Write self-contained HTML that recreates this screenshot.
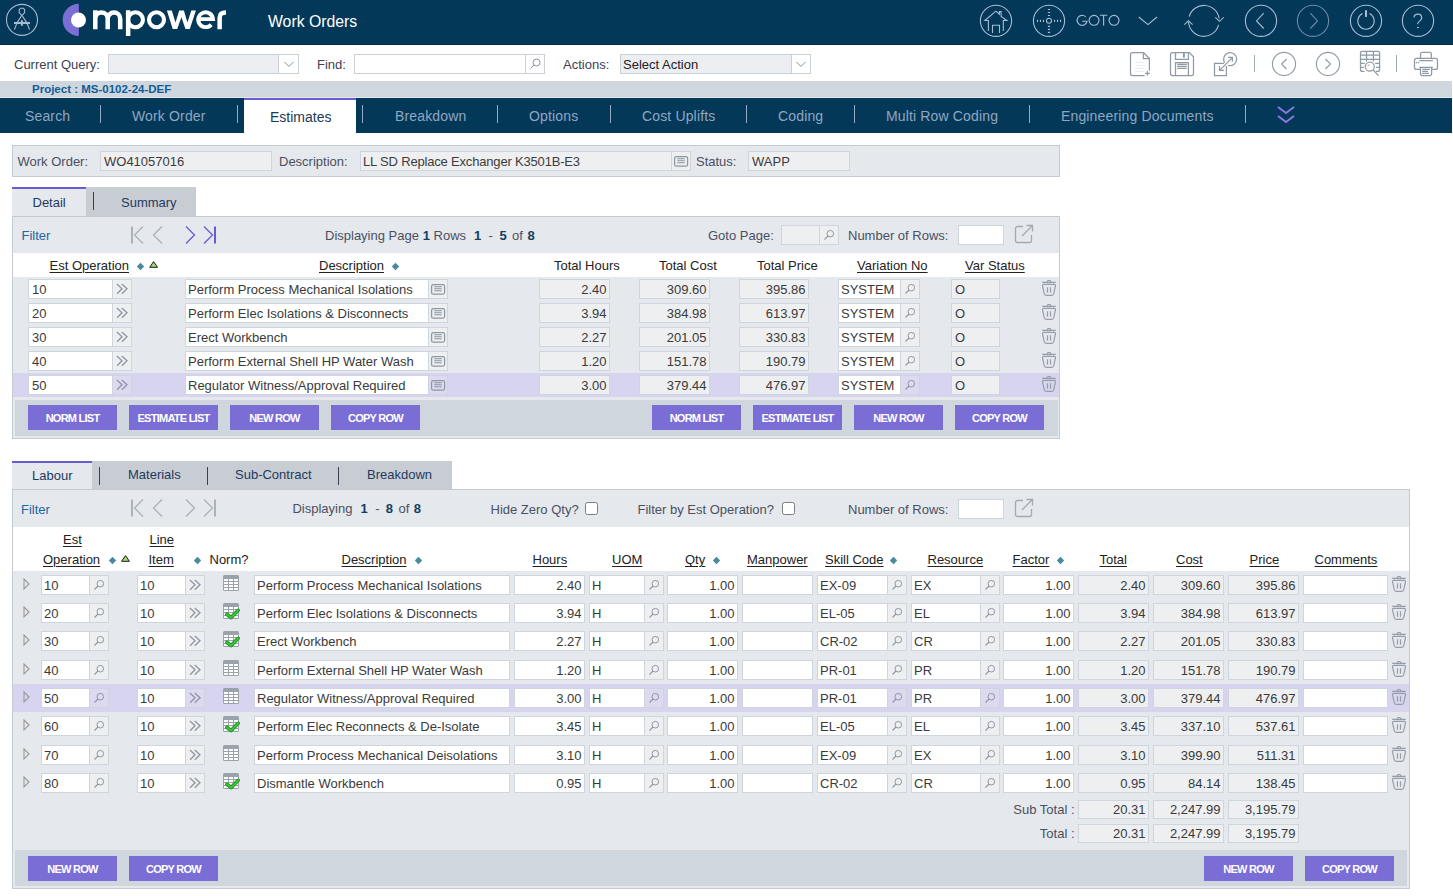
<!DOCTYPE html>
<html><head><meta charset="utf-8"><title>Work Orders</title>
<style>
html,body{margin:0;padding:0;}
body{width:1453px;height:896px;overflow:hidden;position:relative;background:#fff;font-family:"Liberation Sans",sans-serif;}
body div{position:absolute;box-sizing:border-box;}
.t{white-space:pre;line-height:1;}
</style></head><body>
<div style="left:0px;top:0px;width:1453px;height:45px;background:#043858"></div>
<div style="left:0px;top:44px;width:1453px;height:1px;background:#022b47"></div>
<svg style="position:absolute;left:4px;top:3px;" width="36" height="36" viewBox="0 0 36 36"><circle cx="18" cy="16.85" r="15.5" fill="none" stroke="#a6bcd4" stroke-width="1.1"/><path d="M15.2 6.6 L16.6 5.2 H19.2 L20.6 6.6 V9.6 L17.9 12.6 L15.2 9.6 Z" fill="none" stroke="#a6bcd4" stroke-width="1.1"/><path d="M17.4 13.2 Q12.6 19 10.4 26.6 M18.4 13.2 Q23.2 19 25.6 26.6" fill="none" stroke="#a6bcd4" stroke-width="1.1"/><path d="M10 20 H25.9" stroke="#a6bcd4" stroke-width="2.1"/><path d="M17.9 17.2 V22.8" stroke="#a6bcd4" stroke-width="2"/></svg>
<svg style="position:absolute;left:60px;top:2px;" width="34" height="36" viewBox="0 0 34 36"><path d="M18.8 1.8 A16.1 16.1 0 0 0 18.8 34 Z" fill="#7b6fd6"/><circle cx="18.5" cy="18" r="7.5" fill="#fff"/></svg>
<svg style="position:absolute;left:88px;top:5px" width="145" height="34" viewBox="0 0 145 34"><g fill="none" stroke="#fff" stroke-width="4.5" stroke-linecap="butt" stroke-linejoin="miter"><path d="M7.3 24.3 V5.2 M7.3 13.8 A6.2 6.2 0 0 1 19.7 13.8 V24.3 M19.7 13.8 A6.25 6.25 0 0 1 32.2 13.8 V24.3"/><path d="M40.15 5.2 V31"/><circle cx="47.45" cy="14.75" r="7.5" stroke-width="4.1"/><circle cx="68.5" cy="14.75" r="7.5" stroke-width="4.1"/><path d="M78.9 5.6 L83.8 5.6 L87.5 17.5 L91.2 5.6 L95.9 5.6 L99.4 17.5 L103.3 5.6 L107.9 5.6 L101.8 24.1 L97.5 24.1 L93.4 12.3 L89.2 24.1 L84.7 24.1 Z" fill="#fff" stroke="none"/><path d="M110.2 14.1 H125 A7.4 7.4 0 1 0 123.2 19.6" stroke-width="3.9"/><path d="M131.65 24.3 V13 C131.65 9 133.5 7.6 138 7.6"/></g></svg>
<div class="t" style="left:268px;top:13.63px;font-size:15.8px;color:#ffffff;">Work Orders</div>
<svg style="position:absolute;left:978px;top:3px;" width="36" height="36" viewBox="0 0 36 36"><circle cx="18" cy="17.8" r="15.6" fill="none" stroke="#a6bcd4" stroke-width="1.1"/><path d="M10.4 28.1 V17.5 H6.8 L17.9 8.2 L21.4 11.2 V8.6 H23.1 V13.5 L28.9 17.5 H25.3 V28.1 M14.5 29.9 V22.3 H21.5 V29.9" fill="none" stroke="#a6bcd4" stroke-width="1.1"/></svg>
<svg style="position:absolute;left:1031px;top:3px;" width="36" height="36" viewBox="0 0 36 36"><circle cx="18" cy="17.8" r="15.6" fill="none" stroke="#a6bcd4" stroke-width="1.1"/><circle cx="18" cy="17.8" r="2.5" fill="none" stroke="#a6bcd4" stroke-width="1.1"/><path d="M18 5.9 V7 M18 8.9 V10 M18 11.9 V13 M18 22.8 V23.9 M18 25.8 V26.9 M18 28.8 V29.9" stroke="#a6bcd4" stroke-width="2.2"/><path d="M5.9 17.8 H7 M8.9 17.8 H10 M11.9 17.8 H13 M23 17.8 H24.1 M26 17.8 H27.1 M29 17.8 H30.1" stroke="#a6bcd4" stroke-width="2.2"/></svg>
<svg style="position:absolute;left:1070px;top:5px;" width="92" height="30" viewBox="0 0 92 30"><g fill="none" stroke="#a6bcd4" stroke-width="1.15"><path d="M15.7 11.8 A5 5 0 1 0 17.05 16.2 H12.2"/><circle cx="24.05" cy="15.3" r="4.95"/><path d="M29.9 10.25 H37.2 M33.6 10.25 V20.6"/><circle cx="44.05" cy="15.3" r="4.95"/><path d="M68.8 12 L78 19.6 L87 12"/></g></svg>
<svg style="position:absolute;left:1184px;top:3px;" width="40" height="36" viewBox="0 0 40 36"><path d="M5.2 13.7 A15.3 15.3 0 0 1 35.1 15.5" fill="none" stroke="#a6bcd4" stroke-width="1.1"/><path d="M34.6 21.9 A15.3 15.3 0 0 1 4.5 18.5" fill="none" stroke="#a6bcd4" stroke-width="1.1"/><path d="M31.3 14.3 L35.5 18.3 L39.8 14.3 M0.4 21.7 L4.4 17.7 L8.6 21.7" fill="none" stroke="#a6bcd4" stroke-width="1.1"/></svg>
<svg style="position:absolute;left:1243px;top:3px;" width="36" height="36" viewBox="0 0 36 36"><circle cx="18" cy="17.8" r="15.6" fill="none" stroke="#a6bcd4" stroke-width="1.1"/><path d="M20.7 10.2 L13.5 17.9 L20.7 25.5" fill="none" stroke="#a6bcd4" stroke-width="1.1"/></svg>
<svg style="position:absolute;left:1295px;top:3px;" width="36" height="36" viewBox="0 0 36 36"><circle cx="18" cy="17.8" r="15.6" fill="none" stroke="#6d89a6" stroke-width="1.1"/><path d="M15.3 10.2 L22.5 17.9 L15.3 25.5" fill="none" stroke="#6d89a6" stroke-width="1.1"/></svg>
<svg style="position:absolute;left:1348px;top:3px;" width="36" height="36" viewBox="0 0 36 36"><circle cx="18" cy="17.8" r="15.6" fill="none" stroke="#a6bcd4" stroke-width="1.1"/><path d="M14.5 10.6 A8.2 8.2 0 1 0 21.5 10.6" fill="none" stroke="#a6bcd4" stroke-width="1.1"/><path d="M18 7.2 V13.9" fill="none" stroke="#a6bcd4" stroke-width="2.1"/></svg>
<svg style="position:absolute;left:1400px;top:3px;" width="36" height="36" viewBox="0 0 36 36"><circle cx="18" cy="17.8" r="15.6" fill="none" stroke="#a6bcd4" stroke-width="1.1"/><path d="M14 14.3 C14.3 12 16 11.2 17.9 11.2 C20.3 11.2 21.7 12.8 21.7 15 C21.7 17.5 17.5 18.8 17.5 21.3" fill="none" stroke="#a6bcd4" stroke-width="1.2"/><path d="M16.9 24.5 H18.9" stroke="#a6bcd4" stroke-width="1.1"/></svg>
<div class="t" style="left:14px;top:58.00px;font-size:13px;color:#3c4257;">Current Query:</div>
<div style="left:108px;top:54px;width:171px;height:20px;background:#eceef1;border:1px solid #c9d0d8"></div>
<div style="left:278px;top:54px;width:21px;height:20px;background:#fff;border:1px solid #c9d0d8"></div>
<svg style="position:absolute;left:282px;top:58px;" width="14" height="12" viewBox="0 0 14 12"><path d="M2.5 4 L7 8.5 L11.5 4" fill="none" stroke="#8a94a0" stroke-width="1"/></svg>
<div class="t" style="left:317px;top:58.00px;font-size:13px;color:#3c4257;">Find:</div>
<div style="left:354px;top:54px;width:172px;height:20px;background:#fff;border:1px solid #c9d0d8"></div>
<div style="left:525px;top:54px;width:20px;height:20px;background:#fff;border:1px solid #c9d0d8"></div>
<svg style="position:absolute;left:527px;top:56px;" width="16" height="16" viewBox="0 0 16 16"><circle cx="9.5" cy="6.5" r="3.5" fill="none" stroke="#8a94a0" stroke-width="1"/><path d="M7 9 L3.5 12.5" stroke="#8a94a0" stroke-width="1"/></svg>
<div class="t" style="left:563px;top:57.70px;font-size:13px;color:#3c4257;">Actions:</div>
<div style="left:620px;top:54px;width:172px;height:20px;background:#eceef1;border:1px solid #c9d0d8"></div>
<div class="t" style="left:623px;top:57.70px;font-size:13px;color:#222;">Select Action</div>
<div style="left:791px;top:54px;width:20px;height:20px;background:#fff;border:1px solid #c9d0d8"></div>
<svg style="position:absolute;left:794px;top:58px;" width="14" height="12" viewBox="0 0 14 12"><path d="M2.5 4 L7 8.5 L11.5 4" fill="none" stroke="#8a94a0" stroke-width="1"/></svg>
<svg style="position:absolute;left:1126px;top:48px;" width="30" height="30" viewBox="0 0 30 30"><path d="M17.4 4.5 H6.5 A2 2 0 0 0 4.5 6.5 V25.5 A2 2 0 0 0 6.5 27.5 H18.6 M17.4 4.5 L23.4 10.5 V22.8 M17.4 4.5 V10.5 H23.4" fill="none" stroke="#8f9aa5" stroke-width="1.25"/><path d="M9 14.4 H18 M10 17.4 H18.6 M9 20.4 H18 M9 23.4 H18.6" stroke="#e9ecef" stroke-width="1"/><path d="M21.4 23.1 V27.8 M19.1 25.4 H23.9" stroke="#8f9aa5" stroke-width="1.25"/></svg>
<svg style="position:absolute;left:1166px;top:48px;" width="30" height="30" viewBox="0 0 30 30"><path d="M6.5 4.5 H23.4 L27.5 8.8 V25.5 A2 2 0 0 1 25.5 27.5 H6.5 A2 2 0 0 1 4.5 25.5 V6.5 A2 2 0 0 1 6.5 4.5 Z" fill="none" stroke="#8f9aa5" stroke-width="1.25"/><path d="M9.5 4.5 V11.4 H22.4 V4.5 M9.5 27.5 V14.6 H22.4 V27.5 M11.2 16.4 H20.8 M11.2 18.4 H20.8 M11.2 20.4 H20.8" fill="none" stroke="#8f9aa5" stroke-width="1.25"/><path d="M17.9 4.7 V9.7" stroke="#8f9aa5" stroke-width="1.9"/></svg>
<svg style="position:absolute;left:1210px;top:48px;" width="30" height="30" viewBox="0 0 30 30"><path d="M14 15.4 H4.5 V27.5 H16.4 V18.1" fill="none" stroke="#8f9aa5" stroke-width="1.25"/><path d="M14.6 14.6 A6.5 6.5 0 1 1 18.2 17.4" fill="none" stroke="#8f9aa5" stroke-width="1.25"/><path d="M9.9 22.1 L22.1 9.9 M18.1 9.4 H22.4 V13.7 M9.5 18.1 V22.4 H13.9" fill="none" stroke="#8f9aa5" stroke-width="1.25"/></svg>
<div style="left:1254px;top:55px;width:1px;height:17px;background:#a3acb6"></div>
<svg style="position:absolute;left:1270px;top:50px;" width="28" height="28" viewBox="0 0 28 28"><circle cx="14" cy="14" r="11.6" fill="none" stroke="#8f9aa5" stroke-width="1.1"/><path d="M16.5 9 L11.5 14 L16.5 19" fill="none" stroke="#8f9aa5" stroke-width="1.1"/></svg>
<svg style="position:absolute;left:1314px;top:50px;" width="28" height="28" viewBox="0 0 28 28"><circle cx="14" cy="14" r="11.6" fill="none" stroke="#8f9aa5" stroke-width="1.1"/><path d="M11.5 9 L16.5 14 L11.5 19" fill="none" stroke="#8f9aa5" stroke-width="1.1"/></svg>
<svg style="position:absolute;left:1356px;top:48px;" width="30" height="30" viewBox="0 0 30 30"><path d="M8.5 23.4 H6.5 A2 2 0 0 1 4.5 21.4 V5.3 A2 2 0 0 1 6.5 3.3 H21.6 A2 2 0 0 1 23.6 5.3 V21.4 A2 2 0 0 1 21.6 23.4 H20" fill="none" stroke="#8f9aa5" stroke-width="1.25"/><path d="M4.5 7.2 H23.6 M4.5 11.4 H23.6 M4.5 15.4 H8.8 M19 15.4 H23.6 M4.5 19.4 H7.8 M20 19.4 H23.6 M10.5 3.3 V13.4 M17.4 3.3 V13.4" fill="none" stroke="#8f9aa5" stroke-width="1.25"/><circle cx="13.8" cy="18.6" r="4.5" fill="none" stroke="#8f9aa5" stroke-width="1.25"/><path d="M17.2 22 L22.6 27.6" stroke="#8f9aa5" stroke-width="1.25"/><path d="M11.5 18.2 L13.3 16.3" stroke="#8f9aa5" stroke-width="1"/></svg>
<div style="left:1396px;top:55px;width:1px;height:17px;background:#a3acb6"></div>
<svg style="position:absolute;left:1410px;top:48px;" width="30" height="30" viewBox="0 0 30 30"><path d="M10.5 10.4 V6.4 A2 2 0 0 1 12.5 4.4 H19.4 A2 2 0 0 1 21.4 6.4 V10.4" fill="none" stroke="#8f9aa5" stroke-width="1.25"/><path d="M10.5 21.4 H6.5 A2 2 0 0 1 4.5 19.4 V12.4 A2 2 0 0 1 6.5 10.4 H25.5 A2 2 0 0 1 27.5 12.4 V19.4 A2 2 0 0 1 25.5 21.4 H21.6" fill="none" stroke="#8f9aa5" stroke-width="1.25"/><path d="M9.4 12.6 H22.8 M9.4 19.4 H22.8 M10.5 19.4 V25.5 A2 2 0 0 0 12.5 27.5 H19.6 A2 2 0 0 0 21.6 25.5 V19.4 M12.2 21.4 H19.8 M12.2 23.4 H17.9 M12.2 25.4 H18.9" fill="none" stroke="#8f9aa5" stroke-width="1.25"/><circle cx="6.4" cy="14.6" r="0.8" fill="#8f9aa5"/><circle cx="8.5" cy="14.6" r="0.8" fill="#8f9aa5"/></svg>
<div style="left:0px;top:81px;width:1452px;height:16px;background:#d0d6de"></div>
<div style="left:0px;top:97px;width:1452px;height:1px;background:#e6e9ec"></div>
<div class="t" style="left:32px;top:84.27px;font-size:11.5px;color:#0f5c98;font-weight:bold">Project : MS-0102-24-DEF</div>
<div style="left:0px;top:98px;width:1452px;height:35px;background:#043858"></div>
<div style="left:244px;top:98px;width:112px;height:35px;background:#fff"></div>
<div style="left:244px;top:98px;width:112px;height:2px;background:#6b5bd2"></div>
<div class="t" style="left:25px;top:109.15px;font-size:14px;color:#8fa7c3;letter-spacing:0.15px">Search</div>
<div class="t" style="left:132px;top:109.15px;font-size:14px;color:#8fa7c3;letter-spacing:0.15px">Work Order</div>
<div class="t" style="left:395px;top:109.15px;font-size:14px;color:#8fa7c3;letter-spacing:0.15px">Breakdown</div>
<div class="t" style="left:529px;top:109.15px;font-size:14px;color:#8fa7c3;letter-spacing:0.15px">Options</div>
<div class="t" style="left:642px;top:109.15px;font-size:14px;color:#8fa7c3;letter-spacing:0.15px">Cost Uplifts</div>
<div class="t" style="left:778px;top:109.15px;font-size:14px;color:#8fa7c3;letter-spacing:0.15px">Coding</div>
<div class="t" style="left:886px;top:109.15px;font-size:14px;color:#8fa7c3;letter-spacing:0.15px">Multi Row Coding</div>
<div class="t" style="left:1061px;top:109.15px;font-size:14px;color:#8fa7c3;letter-spacing:0.15px">Engineering Documents</div>
<div class="t" style="left:270px;top:109.65px;font-size:14px;color:#1b3a5a;">Estimates</div>
<div style="left:100px;top:105px;width:1px;height:18px;background:#93abc6"></div>
<div style="left:237px;top:105px;width:1px;height:18px;background:#93abc6"></div>
<div style="left:362px;top:105px;width:1px;height:18px;background:#93abc6"></div>
<div style="left:497px;top:105px;width:1px;height:18px;background:#93abc6"></div>
<div style="left:610px;top:105px;width:1px;height:18px;background:#93abc6"></div>
<div style="left:746px;top:105px;width:1px;height:18px;background:#93abc6"></div>
<div style="left:854px;top:105px;width:1px;height:18px;background:#93abc6"></div>
<div style="left:1029px;top:105px;width:1px;height:18px;background:#93abc6"></div>
<div style="left:1245px;top:105px;width:1px;height:18px;background:#93abc6"></div>
<svg style="position:absolute;left:1274px;top:103px;" width="24" height="24" viewBox="0 0 24 24"><path d="M4 4 L12 10 L20 4 M4 13 L12 19 L20 13" fill="none" stroke="#8b78e0" stroke-width="2"/></svg>
<div style="left:12px;top:145px;width:1048px;height:32px;background:#e5e8ec;border:1px solid #c4cacf"></div>
<div class="t" style="left:17.5px;top:155.00px;font-size:13px;color:#4a5063;">Work Order:</div>
<div style="left:100px;top:151px;width:172px;height:20px;background:#eeeff1;border:1px solid #cfd5dc"></div>
<div class="t" style="left:104px;top:155.00px;font-size:13px;color:#3a3a3a;">WO41057016</div>
<div class="t" style="left:279px;top:155.00px;font-size:13px;color:#4a5063;">Description:</div>
<div style="left:360px;top:151px;width:312px;height:20px;background:#eeeff1;border:1px solid #cfd5dc"></div>
<div class="t" style="left:363px;top:155.00px;font-size:13px;color:#3d3d3d;letter-spacing:-0.18px">LL SD Replace Exchanger K3501B-E3</div>
<div style="left:671px;top:151px;width:20px;height:20px;background:#eeeff1;border:1px solid #cfd5dc"></div>
<svg style="position:absolute;left:671px;top:151px;" width="20" height="20" viewBox="0 0 20 20"><rect x="3.6" y="5.6" width="13" height="9.6" rx="1.8" fill="none" stroke="#8f97a3" stroke-width="1.25"/><path d="M6.2 7.7 H13.8 M6.2 9.8 H13.8 M6.2 11.8 H13.8" stroke="#8f97a3" stroke-width="1.05"/></svg>
<div class="t" style="left:696px;top:155.00px;font-size:13px;color:#4a5063;">Status:</div>
<div style="left:748px;top:151px;width:102px;height:20px;background:#eeeff1;border:1px solid #cfd5dc"></div>
<div class="t" style="left:752px;top:155.00px;font-size:13px;color:#3a3a3a;">WAPP</div>
<div style="left:12px;top:187px;width:74px;height:30px;background:#e5e8ec"></div>
<div style="left:12px;top:187px;width:74px;height:2px;background:#6b5bd2"></div>
<div style="left:86px;top:187px;width:110px;height:30px;background:#c8cdd3"></div>
<div style="left:93px;top:192px;width:1px;height:18px;background:#3a3f55"></div>
<div class="t" style="left:32.5px;top:196.00px;font-size:13px;color:#1f3a5f;">Detail</div>
<div class="t" style="left:121px;top:196.00px;font-size:13px;color:#1f3a5f;">Summary</div>
<div style="left:12px;top:216px;width:1048px;height:223px;background:#e5e8ec;border:1px solid #c4cacf"></div>
<div class="t" style="left:21.5px;top:229.00px;font-size:13px;color:#1b67a1;">Filter</div>
<svg style="position:absolute;left:125px;top:220px;" width="100" height="30" viewBox="0 0 100 30"><path d="M7 6.5 V23.5" stroke="#a9b3bb" stroke-width="2"/><path d="M18 6.5 L9.5 15 L18 23.5 M37 6.5 L28.5 15 L37 23.5" fill="none" stroke="#a9b3bb" stroke-width="1.3"/><path d="M61 6.5 L69.5 15 L61 23.5 M79 6.5 L87.5 15 L79 23.5" fill="none" stroke="#6b5bd2" stroke-width="1.3"/><path d="M90 6.5 V23.5" stroke="#6b5bd2" stroke-width="2"/></svg>
<div class="t" style="left:325px;top:229.00px;font-size:13px;color:#4a5063;">Displaying Page</div>
<div class="t" style="left:422.8px;top:229.00px;font-size:13px;color:#123f62;font-weight:bold">1</div>
<div class="t" style="left:433.6px;top:229.00px;font-size:13px;color:#4a5063;">Rows</div>
<div class="t" style="left:473.9px;top:229.00px;font-size:13px;color:#123f62;font-weight:bold">1</div>
<div class="t" style="left:488.4px;top:229.00px;font-size:13px;color:#4a5063;">-</div>
<div class="t" style="left:499.6px;top:229.00px;font-size:13px;color:#123f62;font-weight:bold">5</div>
<div class="t" style="left:512px;top:229.00px;font-size:13px;color:#4a5063;">of</div>
<div class="t" style="left:527.5px;top:229.00px;font-size:13px;color:#123f62;font-weight:bold">8</div>
<div class="t" style="left:708px;top:229.00px;font-size:13px;color:#4a5063;">Goto Page:</div>
<div style="left:781px;top:225px;width:39px;height:20px;background:#eeeff1;border:1px solid #cfd5dc"></div>
<div style="left:819px;top:225px;width:20px;height:20px;background:#eeeff1;border:1px solid #cfd5dc"></div>
<svg style="position:absolute;left:822px;top:228px;" width="14" height="14" viewBox="0 0 14 14"><circle cx="8.3" cy="5.7" r="3.3" fill="none" stroke="#8f97a3" stroke-width="1"/><path d="M6 8 L2.5 11.5" stroke="#8f97a3" stroke-width="1.1"/></svg>
<div class="t" style="left:848px;top:229.00px;font-size:13px;color:#4a5063;">Number of Rows:</div>
<div style="left:958px;top:225px;width:46px;height:20px;background:#fff;border:1px solid #cfd5dc"></div>
<svg style="position:absolute;left:1013px;top:223px;" width="22" height="22" viewBox="0 0 22 22"><path d="M10 3.5 H4.5 A2 2 0 0 0 2.5 5.5 V17.5 A2 2 0 0 0 4.5 19.5 H16.5 A2 2 0 0 0 18.5 17.5 V12" fill="none" stroke="#a2aab4" stroke-width="1.3"/><path d="M9 13 L19.5 2.5 M13.5 2.5 H19.5 V8.5" fill="none" stroke="#a2aab4" stroke-width="1.3"/></svg>
<div style="left:13px;top:253px;width:1046px;height:24px;background:#fff"></div>
<div class="t" style="left:49.5px;top:259.00px;font-size:13px;color:#222;text-decoration:underline;text-underline-offset:2px">Est Operation</div>
<svg style="position:absolute;left:135px;top:261px;" width="10" height="10" viewBox="0 0 10 10"><path d="M5.5 1.7999999999999998 L9.2 5.5 L5.5 9.2 L1.7999999999999998 5.5 Z" fill="#4a8a9e"/></svg>
<svg style="position:absolute;left:148px;top:260px;" width="12" height="10" viewBox="0 0 12 10"><path d="M5.60 1.60 L9.50 7.30 H1.70 Z" fill="#a2da6e" stroke="#1a1a1a" stroke-width="1"/></svg>
<div class="t" style="left:319px;top:259.00px;font-size:13px;color:#222;text-decoration:underline;text-underline-offset:2px">Description</div>
<svg style="position:absolute;left:390px;top:261px;" width="10" height="10" viewBox="0 0 10 10"><path d="M5.5 1.7999999999999998 L9.2 5.5 L5.5 9.2 L1.7999999999999998 5.5 Z" fill="#4a8a9e"/></svg>
<div class="t" style="left:554px;top:259.00px;font-size:13px;color:#222;">Total Hours</div>
<div class="t" style="left:659px;top:259.00px;font-size:13px;color:#222;">Total Cost</div>
<div class="t" style="left:757px;top:259.00px;font-size:13px;color:#222;">Total Price</div>
<div class="t" style="left:857px;top:259.00px;font-size:13px;color:#222;text-decoration:underline;text-underline-offset:2px">Variation No</div>
<div class="t" style="left:965px;top:259.00px;font-size:13px;color:#222;text-decoration:underline;text-underline-offset:2px">Var Status</div>
<div style="left:28px;top:279px;width:85px;height:20px;background:#fff;border:1px solid #cfd5dc"></div>
<div class="t" style="left:32px;top:282.80px;font-size:13px;color:#3a3a3a;">10</div>
<div style="left:112px;top:279px;width:20px;height:20px;background:#eeeff1;border:1px solid #cfd5dc"></div>
<svg style="position:absolute;left:115px;top:282px;" width="14" height="14" viewBox="0 0 14 14"><path d="M1.9 1.9 L7 6.8 L2.1 11.8 M6.8 1.9 L12 6.8 L6.8 11.8" fill="none" stroke="#8f97a3" stroke-width="1.35"/></svg>
<div style="left:185px;top:279px;width:244px;height:20px;background:#fff;border:1px solid #cfd5dc"></div>
<div class="t" style="left:188px;top:282.80px;font-size:13px;color:#3a3a3a;">Perform Process Mechanical Isolations</div>
<div style="left:428px;top:279px;width:20px;height:20px;background:#eeeff1;border:1px solid #cfd5dc"></div>
<svg style="position:absolute;left:428px;top:279px;" width="20" height="20" viewBox="0 0 20 20"><rect x="3.6" y="5.6" width="13" height="9.6" rx="1.8" fill="none" stroke="#8f97a3" stroke-width="1.25"/><path d="M6.2 7.7 H13.8 M6.2 9.8 H13.8 M6.2 11.8 H13.8" stroke="#8f97a3" stroke-width="1.05"/></svg>
<div style="left:539px;top:279px;width:71px;height:20px;background:#eeeff1;border:1px solid #cfd5dc"></div>
<div class="t" style="right:846.5px;top:282.80px;font-size:13px;color:#3a3a3a;text-align:right;">2.40</div>
<div style="left:639px;top:279px;width:71px;height:20px;background:#eeeff1;border:1px solid #cfd5dc"></div>
<div class="t" style="right:746.5px;top:282.80px;font-size:13px;color:#3a3a3a;text-align:right;">309.60</div>
<div style="left:739px;top:279px;width:70px;height:20px;background:#eeeff1;border:1px solid #cfd5dc"></div>
<div class="t" style="right:647.5px;top:282.80px;font-size:13px;color:#3a3a3a;text-align:right;">395.86</div>
<div style="left:838px;top:279px;width:63px;height:20px;background:#fff;border:1px solid #cfd5dc"></div>
<div class="t" style="left:841px;top:282.80px;font-size:13px;color:#3a3a3a;">SYSTEM</div>
<div style="left:900px;top:279px;width:20px;height:20px;background:#eeeff1;border:1px solid #cfd5dc"></div>
<svg style="position:absolute;left:903px;top:282px;" width="14" height="14" viewBox="0 0 14 14"><circle cx="8.3" cy="5.7" r="3.3" fill="none" stroke="#8f97a3" stroke-width="1"/><path d="M6 8 L2.5 11.5" stroke="#8f97a3" stroke-width="1.1"/></svg>
<div style="left:951px;top:279px;width:49px;height:20px;background:#eeeff1;border:1px solid #cfd5dc"></div>
<div class="t" style="left:955px;top:282.80px;font-size:13px;color:#3a3a3a;">O</div>
<svg style="position:absolute;left:1041px;top:280px;" width="16" height="17" viewBox="0 0 16 17"><path d="M1.2 2.4 H14.8 M6.1 2.4 A1.9 1.9 0 0 1 9.9 2.4" fill="none" stroke="#959da8" stroke-width="1.15"/><path d="M2.6 4.4 H13.4 A1.2 1.2 0 0 1 14.5 5.8 L12.6 14.2 A1.5 1.5 0 0 1 11.2 15.3 H4.8 A1.5 1.5 0 0 1 3.4 14.2 L1.5 5.8 A1.2 1.2 0 0 1 2.6 4.4 Z M6.5 7.2 V12.7 M9.5 7.2 V12.7" fill="none" stroke="#959da8" stroke-width="1.15"/></svg>
<div style="left:28px;top:303px;width:85px;height:20px;background:#fff;border:1px solid #cfd5dc"></div>
<div class="t" style="left:32px;top:306.80px;font-size:13px;color:#3a3a3a;">20</div>
<div style="left:112px;top:303px;width:20px;height:20px;background:#eeeff1;border:1px solid #cfd5dc"></div>
<svg style="position:absolute;left:115px;top:306px;" width="14" height="14" viewBox="0 0 14 14"><path d="M1.9 1.9 L7 6.8 L2.1 11.8 M6.8 1.9 L12 6.8 L6.8 11.8" fill="none" stroke="#8f97a3" stroke-width="1.35"/></svg>
<div style="left:185px;top:303px;width:244px;height:20px;background:#fff;border:1px solid #cfd5dc"></div>
<div class="t" style="left:188px;top:306.80px;font-size:13px;color:#3a3a3a;">Perform Elec Isolations &amp; Disconnects</div>
<div style="left:428px;top:303px;width:20px;height:20px;background:#eeeff1;border:1px solid #cfd5dc"></div>
<svg style="position:absolute;left:428px;top:303px;" width="20" height="20" viewBox="0 0 20 20"><rect x="3.6" y="5.6" width="13" height="9.6" rx="1.8" fill="none" stroke="#8f97a3" stroke-width="1.25"/><path d="M6.2 7.7 H13.8 M6.2 9.8 H13.8 M6.2 11.8 H13.8" stroke="#8f97a3" stroke-width="1.05"/></svg>
<div style="left:539px;top:303px;width:71px;height:20px;background:#eeeff1;border:1px solid #cfd5dc"></div>
<div class="t" style="right:846.5px;top:306.80px;font-size:13px;color:#3a3a3a;text-align:right;">3.94</div>
<div style="left:639px;top:303px;width:71px;height:20px;background:#eeeff1;border:1px solid #cfd5dc"></div>
<div class="t" style="right:746.5px;top:306.80px;font-size:13px;color:#3a3a3a;text-align:right;">384.98</div>
<div style="left:739px;top:303px;width:70px;height:20px;background:#eeeff1;border:1px solid #cfd5dc"></div>
<div class="t" style="right:647.5px;top:306.80px;font-size:13px;color:#3a3a3a;text-align:right;">613.97</div>
<div style="left:838px;top:303px;width:63px;height:20px;background:#fff;border:1px solid #cfd5dc"></div>
<div class="t" style="left:841px;top:306.80px;font-size:13px;color:#3a3a3a;">SYSTEM</div>
<div style="left:900px;top:303px;width:20px;height:20px;background:#eeeff1;border:1px solid #cfd5dc"></div>
<svg style="position:absolute;left:903px;top:306px;" width="14" height="14" viewBox="0 0 14 14"><circle cx="8.3" cy="5.7" r="3.3" fill="none" stroke="#8f97a3" stroke-width="1"/><path d="M6 8 L2.5 11.5" stroke="#8f97a3" stroke-width="1.1"/></svg>
<div style="left:951px;top:303px;width:49px;height:20px;background:#eeeff1;border:1px solid #cfd5dc"></div>
<div class="t" style="left:955px;top:306.80px;font-size:13px;color:#3a3a3a;">O</div>
<svg style="position:absolute;left:1041px;top:304px;" width="16" height="17" viewBox="0 0 16 17"><path d="M1.2 2.4 H14.8 M6.1 2.4 A1.9 1.9 0 0 1 9.9 2.4" fill="none" stroke="#959da8" stroke-width="1.15"/><path d="M2.6 4.4 H13.4 A1.2 1.2 0 0 1 14.5 5.8 L12.6 14.2 A1.5 1.5 0 0 1 11.2 15.3 H4.8 A1.5 1.5 0 0 1 3.4 14.2 L1.5 5.8 A1.2 1.2 0 0 1 2.6 4.4 Z M6.5 7.2 V12.7 M9.5 7.2 V12.7" fill="none" stroke="#959da8" stroke-width="1.15"/></svg>
<div style="left:28px;top:327px;width:85px;height:20px;background:#fff;border:1px solid #cfd5dc"></div>
<div class="t" style="left:32px;top:330.80px;font-size:13px;color:#3a3a3a;">30</div>
<div style="left:112px;top:327px;width:20px;height:20px;background:#eeeff1;border:1px solid #cfd5dc"></div>
<svg style="position:absolute;left:115px;top:330px;" width="14" height="14" viewBox="0 0 14 14"><path d="M1.9 1.9 L7 6.8 L2.1 11.8 M6.8 1.9 L12 6.8 L6.8 11.8" fill="none" stroke="#8f97a3" stroke-width="1.35"/></svg>
<div style="left:185px;top:327px;width:244px;height:20px;background:#fff;border:1px solid #cfd5dc"></div>
<div class="t" style="left:188px;top:330.80px;font-size:13px;color:#3a3a3a;">Erect Workbench</div>
<div style="left:428px;top:327px;width:20px;height:20px;background:#eeeff1;border:1px solid #cfd5dc"></div>
<svg style="position:absolute;left:428px;top:327px;" width="20" height="20" viewBox="0 0 20 20"><rect x="3.6" y="5.6" width="13" height="9.6" rx="1.8" fill="none" stroke="#8f97a3" stroke-width="1.25"/><path d="M6.2 7.7 H13.8 M6.2 9.8 H13.8 M6.2 11.8 H13.8" stroke="#8f97a3" stroke-width="1.05"/></svg>
<div style="left:539px;top:327px;width:71px;height:20px;background:#eeeff1;border:1px solid #cfd5dc"></div>
<div class="t" style="right:846.5px;top:330.80px;font-size:13px;color:#3a3a3a;text-align:right;">2.27</div>
<div style="left:639px;top:327px;width:71px;height:20px;background:#eeeff1;border:1px solid #cfd5dc"></div>
<div class="t" style="right:746.5px;top:330.80px;font-size:13px;color:#3a3a3a;text-align:right;">201.05</div>
<div style="left:739px;top:327px;width:70px;height:20px;background:#eeeff1;border:1px solid #cfd5dc"></div>
<div class="t" style="right:647.5px;top:330.80px;font-size:13px;color:#3a3a3a;text-align:right;">330.83</div>
<div style="left:838px;top:327px;width:63px;height:20px;background:#fff;border:1px solid #cfd5dc"></div>
<div class="t" style="left:841px;top:330.80px;font-size:13px;color:#3a3a3a;">SYSTEM</div>
<div style="left:900px;top:327px;width:20px;height:20px;background:#eeeff1;border:1px solid #cfd5dc"></div>
<svg style="position:absolute;left:903px;top:330px;" width="14" height="14" viewBox="0 0 14 14"><circle cx="8.3" cy="5.7" r="3.3" fill="none" stroke="#8f97a3" stroke-width="1"/><path d="M6 8 L2.5 11.5" stroke="#8f97a3" stroke-width="1.1"/></svg>
<div style="left:951px;top:327px;width:49px;height:20px;background:#eeeff1;border:1px solid #cfd5dc"></div>
<div class="t" style="left:955px;top:330.80px;font-size:13px;color:#3a3a3a;">O</div>
<svg style="position:absolute;left:1041px;top:328px;" width="16" height="17" viewBox="0 0 16 17"><path d="M1.2 2.4 H14.8 M6.1 2.4 A1.9 1.9 0 0 1 9.9 2.4" fill="none" stroke="#959da8" stroke-width="1.15"/><path d="M2.6 4.4 H13.4 A1.2 1.2 0 0 1 14.5 5.8 L12.6 14.2 A1.5 1.5 0 0 1 11.2 15.3 H4.8 A1.5 1.5 0 0 1 3.4 14.2 L1.5 5.8 A1.2 1.2 0 0 1 2.6 4.4 Z M6.5 7.2 V12.7 M9.5 7.2 V12.7" fill="none" stroke="#959da8" stroke-width="1.15"/></svg>
<div style="left:28px;top:351px;width:85px;height:20px;background:#fff;border:1px solid #cfd5dc"></div>
<div class="t" style="left:32px;top:354.80px;font-size:13px;color:#3a3a3a;">40</div>
<div style="left:112px;top:351px;width:20px;height:20px;background:#eeeff1;border:1px solid #cfd5dc"></div>
<svg style="position:absolute;left:115px;top:354px;" width="14" height="14" viewBox="0 0 14 14"><path d="M1.9 1.9 L7 6.8 L2.1 11.8 M6.8 1.9 L12 6.8 L6.8 11.8" fill="none" stroke="#8f97a3" stroke-width="1.35"/></svg>
<div style="left:185px;top:351px;width:244px;height:20px;background:#fff;border:1px solid #cfd5dc"></div>
<div class="t" style="left:188px;top:354.80px;font-size:13px;color:#3a3a3a;">Perform External Shell HP Water Wash</div>
<div style="left:428px;top:351px;width:20px;height:20px;background:#eeeff1;border:1px solid #cfd5dc"></div>
<svg style="position:absolute;left:428px;top:351px;" width="20" height="20" viewBox="0 0 20 20"><rect x="3.6" y="5.6" width="13" height="9.6" rx="1.8" fill="none" stroke="#8f97a3" stroke-width="1.25"/><path d="M6.2 7.7 H13.8 M6.2 9.8 H13.8 M6.2 11.8 H13.8" stroke="#8f97a3" stroke-width="1.05"/></svg>
<div style="left:539px;top:351px;width:71px;height:20px;background:#eeeff1;border:1px solid #cfd5dc"></div>
<div class="t" style="right:846.5px;top:354.80px;font-size:13px;color:#3a3a3a;text-align:right;">1.20</div>
<div style="left:639px;top:351px;width:71px;height:20px;background:#eeeff1;border:1px solid #cfd5dc"></div>
<div class="t" style="right:746.5px;top:354.80px;font-size:13px;color:#3a3a3a;text-align:right;">151.78</div>
<div style="left:739px;top:351px;width:70px;height:20px;background:#eeeff1;border:1px solid #cfd5dc"></div>
<div class="t" style="right:647.5px;top:354.80px;font-size:13px;color:#3a3a3a;text-align:right;">190.79</div>
<div style="left:838px;top:351px;width:63px;height:20px;background:#fff;border:1px solid #cfd5dc"></div>
<div class="t" style="left:841px;top:354.80px;font-size:13px;color:#3a3a3a;">SYSTEM</div>
<div style="left:900px;top:351px;width:20px;height:20px;background:#eeeff1;border:1px solid #cfd5dc"></div>
<svg style="position:absolute;left:903px;top:354px;" width="14" height="14" viewBox="0 0 14 14"><circle cx="8.3" cy="5.7" r="3.3" fill="none" stroke="#8f97a3" stroke-width="1"/><path d="M6 8 L2.5 11.5" stroke="#8f97a3" stroke-width="1.1"/></svg>
<div style="left:951px;top:351px;width:49px;height:20px;background:#eeeff1;border:1px solid #cfd5dc"></div>
<div class="t" style="left:955px;top:354.80px;font-size:13px;color:#3a3a3a;">O</div>
<svg style="position:absolute;left:1041px;top:352px;" width="16" height="17" viewBox="0 0 16 17"><path d="M1.2 2.4 H14.8 M6.1 2.4 A1.9 1.9 0 0 1 9.9 2.4" fill="none" stroke="#959da8" stroke-width="1.15"/><path d="M2.6 4.4 H13.4 A1.2 1.2 0 0 1 14.5 5.8 L12.6 14.2 A1.5 1.5 0 0 1 11.2 15.3 H4.8 A1.5 1.5 0 0 1 3.4 14.2 L1.5 5.8 A1.2 1.2 0 0 1 2.6 4.4 Z M6.5 7.2 V12.7 M9.5 7.2 V12.7" fill="none" stroke="#959da8" stroke-width="1.15"/></svg>
<div style="left:13px;top:373px;width:1046px;height:24px;background:#d7d4ef"></div>
<div style="left:28px;top:375px;width:85px;height:20px;background:#fff;border:1px solid #cfd5dc"></div>
<div class="t" style="left:32px;top:378.80px;font-size:13px;color:#3a3a3a;">50</div>
<div style="left:112px;top:375px;width:20px;height:20px;background:#dcd9f0;border:1px solid #cfd5dc"></div>
<svg style="position:absolute;left:115px;top:378px;" width="14" height="14" viewBox="0 0 14 14"><path d="M1.9 1.9 L7 6.8 L2.1 11.8 M6.8 1.9 L12 6.8 L6.8 11.8" fill="none" stroke="#8f97a3" stroke-width="1.35"/></svg>
<div style="left:185px;top:375px;width:244px;height:20px;background:#fff;border:1px solid #cfd5dc"></div>
<div class="t" style="left:188px;top:378.80px;font-size:13px;color:#3a3a3a;">Regulator Witness/Approval Required</div>
<div style="left:428px;top:375px;width:20px;height:20px;background:#dcd9f0;border:1px solid #cfd5dc"></div>
<svg style="position:absolute;left:428px;top:375px;" width="20" height="20" viewBox="0 0 20 20"><rect x="3.6" y="5.6" width="13" height="9.6" rx="1.8" fill="none" stroke="#8f97a3" stroke-width="1.25"/><path d="M6.2 7.7 H13.8 M6.2 9.8 H13.8 M6.2 11.8 H13.8" stroke="#8f97a3" stroke-width="1.05"/></svg>
<div style="left:539px;top:375px;width:71px;height:20px;background:#eeeff1;border:1px solid #cfd5dc"></div>
<div class="t" style="right:846.5px;top:378.80px;font-size:13px;color:#3a3a3a;text-align:right;">3.00</div>
<div style="left:639px;top:375px;width:71px;height:20px;background:#eeeff1;border:1px solid #cfd5dc"></div>
<div class="t" style="right:746.5px;top:378.80px;font-size:13px;color:#3a3a3a;text-align:right;">379.44</div>
<div style="left:739px;top:375px;width:70px;height:20px;background:#eeeff1;border:1px solid #cfd5dc"></div>
<div class="t" style="right:647.5px;top:378.80px;font-size:13px;color:#3a3a3a;text-align:right;">476.97</div>
<div style="left:838px;top:375px;width:63px;height:20px;background:#fff;border:1px solid #cfd5dc"></div>
<div class="t" style="left:841px;top:378.80px;font-size:13px;color:#3a3a3a;">SYSTEM</div>
<div style="left:900px;top:375px;width:20px;height:20px;background:#dcd9f0;border:1px solid #cfd5dc"></div>
<svg style="position:absolute;left:903px;top:378px;" width="14" height="14" viewBox="0 0 14 14"><circle cx="8.3" cy="5.7" r="3.3" fill="none" stroke="#8f97a3" stroke-width="1"/><path d="M6 8 L2.5 11.5" stroke="#8f97a3" stroke-width="1.1"/></svg>
<div style="left:951px;top:375px;width:49px;height:20px;background:#eeeff1;border:1px solid #cfd5dc"></div>
<div class="t" style="left:955px;top:378.80px;font-size:13px;color:#3a3a3a;">O</div>
<svg style="position:absolute;left:1041px;top:376px;" width="16" height="17" viewBox="0 0 16 17"><path d="M1.2 2.4 H14.8 M6.1 2.4 A1.9 1.9 0 0 1 9.9 2.4" fill="none" stroke="#959da8" stroke-width="1.15"/><path d="M2.6 4.4 H13.4 A1.2 1.2 0 0 1 14.5 5.8 L12.6 14.2 A1.5 1.5 0 0 1 11.2 15.3 H4.8 A1.5 1.5 0 0 1 3.4 14.2 L1.5 5.8 A1.2 1.2 0 0 1 2.6 4.4 Z M6.5 7.2 V12.7 M9.5 7.2 V12.7" fill="none" stroke="#959da8" stroke-width="1.15"/></svg>
<div style="left:15px;top:400px;width:1043px;height:36px;background:#d0d6de"></div>
<div style="left:28px;top:405px;width:89px;height:25px;background:#7a6dd6;color:#fff;font-size:11px;font-weight:bold;letter-spacing:-0.75px;text-align:center;line-height:26px;white-space:pre">NORM LIST</div>
<div style="left:129px;top:405px;width:89px;height:25px;background:#7a6dd6;color:#fff;font-size:11px;font-weight:bold;letter-spacing:-0.75px;text-align:center;line-height:26px;white-space:pre">ESTIMATE LIST</div>
<div style="left:230px;top:405px;width:89px;height:25px;background:#7a6dd6;color:#fff;font-size:11px;font-weight:bold;letter-spacing:-0.75px;text-align:center;line-height:26px;white-space:pre">NEW ROW</div>
<div style="left:331px;top:405px;width:89px;height:25px;background:#7a6dd6;color:#fff;font-size:11px;font-weight:bold;letter-spacing:-0.75px;text-align:center;line-height:26px;white-space:pre">COPY ROW</div>
<div style="left:652px;top:405px;width:89px;height:25px;background:#7a6dd6;color:#fff;font-size:11px;font-weight:bold;letter-spacing:-0.75px;text-align:center;line-height:26px;white-space:pre">NORM LIST</div>
<div style="left:753px;top:405px;width:89px;height:25px;background:#7a6dd6;color:#fff;font-size:11px;font-weight:bold;letter-spacing:-0.75px;text-align:center;line-height:26px;white-space:pre">ESTIMATE LIST</div>
<div style="left:854px;top:405px;width:89px;height:25px;background:#7a6dd6;color:#fff;font-size:11px;font-weight:bold;letter-spacing:-0.75px;text-align:center;line-height:26px;white-space:pre">NEW ROW</div>
<div style="left:955px;top:405px;width:89px;height:25px;background:#7a6dd6;color:#fff;font-size:11px;font-weight:bold;letter-spacing:-0.75px;text-align:center;line-height:26px;white-space:pre">COPY ROW</div>
<div style="left:12px;top:461px;width:80px;height:29px;background:#e5e8ec"></div>
<div style="left:12px;top:461px;width:80px;height:2px;background:#6b5bd2"></div>
<div style="left:92px;top:461px;width:360px;height:29px;background:#c8cdd3"></div>
<div style="left:99px;top:467px;width:1px;height:18px;background:#3a3f55"></div>
<div style="left:207px;top:467px;width:1px;height:18px;background:#3a3f55"></div>
<div style="left:338px;top:467px;width:1px;height:18px;background:#3a3f55"></div>
<div class="t" style="left:32px;top:469.00px;font-size:13px;color:#1f3a5f;">Labour</div>
<div class="t" style="left:128px;top:468.00px;font-size:13px;color:#1f3a5f;">Materials</div>
<div class="t" style="left:235px;top:468.00px;font-size:13px;color:#1f3a5f;">Sub-Contract</div>
<div class="t" style="left:367px;top:468.00px;font-size:13px;color:#1f3a5f;">Breakdown</div>
<div style="left:12px;top:489px;width:1398px;height:400px;background:#e5e8ec;border:1px solid #c4cacf"></div>
<div class="t" style="left:21px;top:502.50px;font-size:13px;color:#1b67a1;">Filter</div>
<svg style="position:absolute;left:125px;top:493px;" width="100" height="30" viewBox="0 0 100 30"><path d="M7 6.5 V23.5" stroke="#a9b3bb" stroke-width="2"/><path d="M18 6.5 L9.5 15 L18 23.5 M37 6.5 L28.5 15 L37 23.5" fill="none" stroke="#a9b3bb" stroke-width="1.3"/><path d="M61 6.5 L69.5 15 L61 23.5 M79 6.5 L87.5 15 L79 23.5" fill="none" stroke="#a9b3bb" stroke-width="1.3"/><path d="M90 6.5 V23.5" stroke="#a9b3bb" stroke-width="2"/></svg>
<div class="t" style="left:292.4px;top:501.70px;font-size:13px;color:#4a5063;">Displaying</div>
<div class="t" style="left:360.5px;top:501.70px;font-size:13px;color:#123f62;font-weight:bold">1</div>
<div class="t" style="left:375.3px;top:501.70px;font-size:13px;color:#4a5063;">-</div>
<div class="t" style="left:385.8px;top:501.70px;font-size:13px;color:#123f62;font-weight:bold">8</div>
<div class="t" style="left:398.5px;top:501.70px;font-size:13px;color:#4a5063;">of</div>
<div class="t" style="left:413.8px;top:501.70px;font-size:13px;color:#123f62;font-weight:bold">8</div>
<div class="t" style="left:490.5px;top:502.50px;font-size:13px;color:#4a5063;">Hide Zero Qty?</div>
<div style="left:585px;top:502px;width:13px;height:13px;background:#fff;border:1px solid #7d7d7d;border-radius:2.5px"></div>
<div class="t" style="left:637.5px;top:502.50px;font-size:13px;color:#4a5063;">Filter by Est Operation?</div>
<div style="left:782px;top:502px;width:13px;height:13px;background:#fff;border:1px solid #7d7d7d;border-radius:2.5px"></div>
<div class="t" style="left:848px;top:502.50px;font-size:13px;color:#4a5063;">Number of Rows:</div>
<div style="left:958px;top:499px;width:46px;height:20px;background:#fff;border:1px solid #cfd5dc"></div>
<svg style="position:absolute;left:1013px;top:497px;" width="22" height="22" viewBox="0 0 22 22"><path d="M10 3.5 H4.5 A2 2 0 0 0 2.5 5.5 V17.5 A2 2 0 0 0 4.5 19.5 H16.5 A2 2 0 0 0 18.5 17.5 V12" fill="none" stroke="#a2aab4" stroke-width="1.3"/><path d="M9 13 L19.5 2.5 M13.5 2.5 H19.5 V8.5" fill="none" stroke="#a2aab4" stroke-width="1.3"/></svg>
<div style="left:13px;top:527px;width:1396px;height:44px;background:#fff"></div>
<div class="t" style="left:63px;top:533.00px;font-size:13px;color:#222;text-decoration:underline;text-underline-offset:2px">Est</div>
<div class="t" style="left:43px;top:553.00px;font-size:13px;color:#222;text-decoration:underline;text-underline-offset:2px">Operation</div>
<svg style="position:absolute;left:107px;top:555px;" width="10" height="10" viewBox="0 0 10 10"><path d="M5.5 1.7999999999999998 L9.2 5.5 L5.5 9.2 L1.7999999999999998 5.5 Z" fill="#4a8a9e"/></svg>
<svg style="position:absolute;left:120px;top:554px;" width="12" height="10" viewBox="0 0 12 10"><path d="M5.50 1.60 L9.40 7.30 H1.60 Z" fill="#a2da6e" stroke="#1a1a1a" stroke-width="1"/></svg>
<div class="t" style="left:149.5px;top:533.00px;font-size:13px;color:#222;text-decoration:underline;text-underline-offset:2px">Line</div>
<div class="t" style="left:148.5px;top:553.00px;font-size:13px;color:#222;text-decoration:underline;text-underline-offset:2px">Item</div>
<svg style="position:absolute;left:192px;top:555px;" width="10" height="10" viewBox="0 0 10 10"><path d="M5.5 1.7999999999999998 L9.2 5.5 L5.5 9.2 L1.7999999999999998 5.5 Z" fill="#4a8a9e"/></svg>
<div class="t" style="left:209.5px;top:553.00px;font-size:13px;color:#222;">Norm?</div>
<div class="t" style="left:341.5px;top:553.00px;font-size:13px;color:#222;text-decoration:underline;text-underline-offset:2px">Description</div>
<svg style="position:absolute;left:413px;top:555px;" width="10" height="10" viewBox="0 0 10 10"><path d="M5.5 1.7999999999999998 L9.2 5.5 L5.5 9.2 L1.7999999999999998 5.5 Z" fill="#4a8a9e"/></svg>
<div class="t" style="left:532.5px;top:553.00px;font-size:13px;color:#222;text-decoration:underline;text-underline-offset:2px">Hours</div>
<div class="t" style="left:612px;top:553.00px;font-size:13px;color:#222;text-decoration:underline;text-underline-offset:2px">UOM</div>
<div class="t" style="left:685px;top:553.00px;font-size:13px;color:#222;text-decoration:underline;text-underline-offset:2px">Qty</div>
<svg style="position:absolute;left:711px;top:555px;" width="10" height="10" viewBox="0 0 10 10"><path d="M5.5 1.7999999999999998 L9.2 5.5 L5.5 9.2 L1.7999999999999998 5.5 Z" fill="#4a8a9e"/></svg>
<div class="t" style="left:747px;top:553.00px;font-size:13px;color:#222;text-decoration:underline;text-underline-offset:2px">Manpower</div>
<div class="t" style="left:825px;top:553.00px;font-size:13px;color:#222;text-decoration:underline;text-underline-offset:2px">Skill Code</div>
<svg style="position:absolute;left:888px;top:555px;" width="10" height="10" viewBox="0 0 10 10"><path d="M5.5 1.7999999999999998 L9.2 5.5 L5.5 9.2 L1.7999999999999998 5.5 Z" fill="#4a8a9e"/></svg>
<div class="t" style="left:927.5px;top:553.00px;font-size:13px;color:#222;text-decoration:underline;text-underline-offset:2px">Resource</div>
<div class="t" style="left:1012.5px;top:553.00px;font-size:13px;color:#222;text-decoration:underline;text-underline-offset:2px">Factor</div>
<svg style="position:absolute;left:1055px;top:555px;" width="10" height="10" viewBox="0 0 10 10"><path d="M5.5 1.7999999999999998 L9.2 5.5 L5.5 9.2 L1.7999999999999998 5.5 Z" fill="#4a8a9e"/></svg>
<div class="t" style="left:1099.5px;top:553.00px;font-size:13px;color:#222;text-decoration:underline;text-underline-offset:2px">Total</div>
<div class="t" style="left:1176px;top:553.00px;font-size:13px;color:#222;text-decoration:underline;text-underline-offset:2px">Cost</div>
<div class="t" style="left:1249.5px;top:553.00px;font-size:13px;color:#222;text-decoration:underline;text-underline-offset:2px">Price</div>
<div class="t" style="left:1314.5px;top:553.00px;font-size:13px;color:#222;text-decoration:underline;text-underline-offset:2px">Comments</div>
<svg style="position:absolute;left:22.5px;top:577.5px;" width="8" height="14" viewBox="0 0 8 14"><path d="M1 1 L6 6 L1 11 Z" fill="none" stroke="#999" stroke-width="1.1" stroke-linejoin="miter"/></svg>
<div style="left:41px;top:575px;width:49px;height:20px;background:#fff;border:1px solid #cfd5dc"></div>
<div class="t" style="left:44px;top:578.80px;font-size:13px;color:#3a3a3a;">10</div>
<div style="left:89px;top:575px;width:20px;height:20px;background:#eeeff1;border:1px solid #cfd5dc"></div>
<svg style="position:absolute;left:92px;top:578px;" width="14" height="14" viewBox="0 0 14 14"><circle cx="8.3" cy="5.7" r="3.3" fill="none" stroke="#8f97a3" stroke-width="1"/><path d="M6 8 L2.5 11.5" stroke="#8f97a3" stroke-width="1.1"/></svg>
<div style="left:137px;top:575px;width:49px;height:20px;background:#fff;border:1px solid #cfd5dc"></div>
<div class="t" style="left:140px;top:578.80px;font-size:13px;color:#3a3a3a;">10</div>
<div style="left:185px;top:575px;width:20px;height:20px;background:#eeeff1;border:1px solid #cfd5dc"></div>
<svg style="position:absolute;left:188px;top:578px;" width="14" height="14" viewBox="0 0 14 14"><path d="M1.9 1.9 L7 6.8 L2.1 11.8 M6.8 1.9 L12 6.8 L6.8 11.8" fill="none" stroke="#8f97a3" stroke-width="1.35"/></svg>
<svg style="position:absolute;left:223px;top:575px;overflow:visible" width="17" height="17" viewBox="0 0 17 17"><rect x="0" y="0" width="16" height="16" rx="1.5" fill="#9aa2ac"/><rect x="1" y="4" width="4" height="2" fill="#fff"/><rect x="1" y="7" width="4" height="2" fill="#fff"/><rect x="1" y="10" width="4" height="2" fill="#fff"/><rect x="1" y="13" width="4" height="2" fill="#fff"/><rect x="6" y="4" width="4" height="2" fill="#fff"/><rect x="6" y="7" width="4" height="2" fill="#fff"/><rect x="6" y="10" width="4" height="2" fill="#fff"/><rect x="6" y="13" width="4" height="2" fill="#fff"/><rect x="11" y="4" width="4" height="2" fill="#fff"/><rect x="11" y="7" width="4" height="2" fill="#fff"/><rect x="11" y="10" width="4" height="2" fill="#fff"/><rect x="11" y="13" width="4" height="2" fill="#fff"/></svg>
<div style="left:254px;top:575px;width:256px;height:20px;background:#fff;border:1px solid #cfd5dc"></div>
<div class="t" style="left:257px;top:578.80px;font-size:13px;color:#3a3a3a;">Perform Process Mechanical Isolations</div>
<div style="left:514px;top:575px;width:71px;height:20px;background:#fff;border:1px solid #cfd5dc"></div>
<div class="t" style="right:871.5px;top:578.80px;font-size:13px;color:#3a3a3a;text-align:right;">2.40</div>
<div style="left:589px;top:575px;width:56px;height:20px;background:#fff;border:1px solid #cfd5dc"></div>
<div class="t" style="left:592px;top:578.80px;font-size:13px;color:#3a3a3a;">H</div>
<div style="left:644px;top:575px;width:20px;height:20px;background:#eeeff1;border:1px solid #cfd5dc"></div>
<svg style="position:absolute;left:647px;top:578px;" width="14" height="14" viewBox="0 0 14 14"><circle cx="8.3" cy="5.7" r="3.3" fill="none" stroke="#8f97a3" stroke-width="1"/><path d="M6 8 L2.5 11.5" stroke="#8f97a3" stroke-width="1.1"/></svg>
<div style="left:667px;top:575px;width:71px;height:20px;background:#fff;border:1px solid #cfd5dc"></div>
<div class="t" style="right:718.5px;top:578.80px;font-size:13px;color:#3a3a3a;text-align:right;">1.00</div>
<div style="left:742px;top:575px;width:71px;height:20px;background:#fff;border:1px solid #cfd5dc"></div>
<div style="left:817px;top:575px;width:71px;height:20px;background:#fff;border:1px solid #cfd5dc"></div>
<div class="t" style="left:820px;top:578.80px;font-size:13px;color:#3a3a3a;">EX-09</div>
<div style="left:887px;top:575px;width:20px;height:20px;background:#eeeff1;border:1px solid #cfd5dc"></div>
<svg style="position:absolute;left:890px;top:578px;" width="14" height="14" viewBox="0 0 14 14"><circle cx="8.3" cy="5.7" r="3.3" fill="none" stroke="#8f97a3" stroke-width="1"/><path d="M6 8 L2.5 11.5" stroke="#8f97a3" stroke-width="1.1"/></svg>
<div style="left:911px;top:575px;width:70px;height:20px;background:#fff;border:1px solid #cfd5dc"></div>
<div class="t" style="left:914px;top:578.80px;font-size:13px;color:#3a3a3a;">EX</div>
<div style="left:980px;top:575px;width:20px;height:20px;background:#eeeff1;border:1px solid #cfd5dc"></div>
<svg style="position:absolute;left:983px;top:578px;" width="14" height="14" viewBox="0 0 14 14"><circle cx="8.3" cy="5.7" r="3.3" fill="none" stroke="#8f97a3" stroke-width="1"/><path d="M6 8 L2.5 11.5" stroke="#8f97a3" stroke-width="1.1"/></svg>
<div style="left:1003px;top:575px;width:71px;height:20px;background:#fff;border:1px solid #cfd5dc"></div>
<div class="t" style="right:382.5px;top:578.80px;font-size:13px;color:#3a3a3a;text-align:right;">1.00</div>
<div style="left:1078px;top:575px;width:71px;height:20px;background:#eeeff1;border:1px solid #cfd5dc"></div>
<div class="t" style="right:307.5px;top:578.80px;font-size:13px;color:#3a3a3a;text-align:right;">2.40</div>
<div style="left:1153px;top:575px;width:71px;height:20px;background:#eeeff1;border:1px solid #cfd5dc"></div>
<div class="t" style="right:232.5px;top:578.80px;font-size:13px;color:#3a3a3a;text-align:right;">309.60</div>
<div style="left:1228px;top:575px;width:71px;height:20px;background:#eeeff1;border:1px solid #cfd5dc"></div>
<div class="t" style="right:157.5px;top:578.80px;font-size:13px;color:#3a3a3a;text-align:right;">395.86</div>
<div style="left:1303px;top:575px;width:85px;height:20px;background:#fff;border:1px solid #cfd5dc"></div>
<svg style="position:absolute;left:1391px;top:576px;" width="16" height="17" viewBox="0 0 16 17"><path d="M1.2 2.4 H14.8 M6.1 2.4 A1.9 1.9 0 0 1 9.9 2.4" fill="none" stroke="#959da8" stroke-width="1.15"/><path d="M2.6 4.4 H13.4 A1.2 1.2 0 0 1 14.5 5.8 L12.6 14.2 A1.5 1.5 0 0 1 11.2 15.3 H4.8 A1.5 1.5 0 0 1 3.4 14.2 L1.5 5.8 A1.2 1.2 0 0 1 2.6 4.4 Z M6.5 7.2 V12.7 M9.5 7.2 V12.7" fill="none" stroke="#959da8" stroke-width="1.15"/></svg>
<svg style="position:absolute;left:22.5px;top:605.5px;" width="8" height="14" viewBox="0 0 8 14"><path d="M1 1 L6 6 L1 11 Z" fill="none" stroke="#999" stroke-width="1.1" stroke-linejoin="miter"/></svg>
<div style="left:41px;top:603px;width:49px;height:20px;background:#fff;border:1px solid #cfd5dc"></div>
<div class="t" style="left:44px;top:606.80px;font-size:13px;color:#3a3a3a;">20</div>
<div style="left:89px;top:603px;width:20px;height:20px;background:#eeeff1;border:1px solid #cfd5dc"></div>
<svg style="position:absolute;left:92px;top:606px;" width="14" height="14" viewBox="0 0 14 14"><circle cx="8.3" cy="5.7" r="3.3" fill="none" stroke="#8f97a3" stroke-width="1"/><path d="M6 8 L2.5 11.5" stroke="#8f97a3" stroke-width="1.1"/></svg>
<div style="left:137px;top:603px;width:49px;height:20px;background:#fff;border:1px solid #cfd5dc"></div>
<div class="t" style="left:140px;top:606.80px;font-size:13px;color:#3a3a3a;">10</div>
<div style="left:185px;top:603px;width:20px;height:20px;background:#eeeff1;border:1px solid #cfd5dc"></div>
<svg style="position:absolute;left:188px;top:606px;" width="14" height="14" viewBox="0 0 14 14"><path d="M1.9 1.9 L7 6.8 L2.1 11.8 M6.8 1.9 L12 6.8 L6.8 11.8" fill="none" stroke="#8f97a3" stroke-width="1.35"/></svg>
<svg style="position:absolute;left:223px;top:603px;overflow:visible" width="17" height="17" viewBox="0 0 17 17"><rect x="0" y="0" width="16" height="16" rx="1.5" fill="#9aa2ac"/><rect x="1" y="4" width="4" height="2" fill="#fff"/><rect x="1" y="7" width="4" height="2" fill="#fff"/><rect x="1" y="10" width="4" height="2" fill="#fff"/><rect x="1" y="13" width="4" height="2" fill="#fff"/><rect x="6" y="4" width="4" height="2" fill="#fff"/><rect x="6" y="7" width="4" height="2" fill="#fff"/><rect x="6" y="10" width="4" height="2" fill="#fff"/><rect x="6" y="13" width="4" height="2" fill="#fff"/><rect x="11" y="4" width="4" height="2" fill="#fff"/><rect x="11" y="7" width="4" height="2" fill="#fff"/><rect x="11" y="10" width="4" height="2" fill="#fff"/><rect x="11" y="13" width="4" height="2" fill="#fff"/><path d="M3.8 11.3 L8.1 14.6 L15.2 7.3" fill="none" stroke="#169316" stroke-width="3.6" stroke-linejoin="round" stroke-linecap="round"/><path d="M3.8 11.3 L8.1 14.6 L15.2 7.3" fill="none" stroke="#3cc23c" stroke-width="2" stroke-linejoin="round" stroke-linecap="round"/></svg>
<div style="left:254px;top:603px;width:256px;height:20px;background:#fff;border:1px solid #cfd5dc"></div>
<div class="t" style="left:257px;top:606.80px;font-size:13px;color:#3a3a3a;">Perform Elec Isolations &amp; Disconnects</div>
<div style="left:514px;top:603px;width:71px;height:20px;background:#fff;border:1px solid #cfd5dc"></div>
<div class="t" style="right:871.5px;top:606.80px;font-size:13px;color:#3a3a3a;text-align:right;">3.94</div>
<div style="left:589px;top:603px;width:56px;height:20px;background:#fff;border:1px solid #cfd5dc"></div>
<div class="t" style="left:592px;top:606.80px;font-size:13px;color:#3a3a3a;">H</div>
<div style="left:644px;top:603px;width:20px;height:20px;background:#eeeff1;border:1px solid #cfd5dc"></div>
<svg style="position:absolute;left:647px;top:606px;" width="14" height="14" viewBox="0 0 14 14"><circle cx="8.3" cy="5.7" r="3.3" fill="none" stroke="#8f97a3" stroke-width="1"/><path d="M6 8 L2.5 11.5" stroke="#8f97a3" stroke-width="1.1"/></svg>
<div style="left:667px;top:603px;width:71px;height:20px;background:#fff;border:1px solid #cfd5dc"></div>
<div class="t" style="right:718.5px;top:606.80px;font-size:13px;color:#3a3a3a;text-align:right;">1.00</div>
<div style="left:742px;top:603px;width:71px;height:20px;background:#fff;border:1px solid #cfd5dc"></div>
<div style="left:817px;top:603px;width:71px;height:20px;background:#fff;border:1px solid #cfd5dc"></div>
<div class="t" style="left:820px;top:606.80px;font-size:13px;color:#3a3a3a;">EL-05</div>
<div style="left:887px;top:603px;width:20px;height:20px;background:#eeeff1;border:1px solid #cfd5dc"></div>
<svg style="position:absolute;left:890px;top:606px;" width="14" height="14" viewBox="0 0 14 14"><circle cx="8.3" cy="5.7" r="3.3" fill="none" stroke="#8f97a3" stroke-width="1"/><path d="M6 8 L2.5 11.5" stroke="#8f97a3" stroke-width="1.1"/></svg>
<div style="left:911px;top:603px;width:70px;height:20px;background:#fff;border:1px solid #cfd5dc"></div>
<div class="t" style="left:914px;top:606.80px;font-size:13px;color:#3a3a3a;">EL</div>
<div style="left:980px;top:603px;width:20px;height:20px;background:#eeeff1;border:1px solid #cfd5dc"></div>
<svg style="position:absolute;left:983px;top:606px;" width="14" height="14" viewBox="0 0 14 14"><circle cx="8.3" cy="5.7" r="3.3" fill="none" stroke="#8f97a3" stroke-width="1"/><path d="M6 8 L2.5 11.5" stroke="#8f97a3" stroke-width="1.1"/></svg>
<div style="left:1003px;top:603px;width:71px;height:20px;background:#fff;border:1px solid #cfd5dc"></div>
<div class="t" style="right:382.5px;top:606.80px;font-size:13px;color:#3a3a3a;text-align:right;">1.00</div>
<div style="left:1078px;top:603px;width:71px;height:20px;background:#eeeff1;border:1px solid #cfd5dc"></div>
<div class="t" style="right:307.5px;top:606.80px;font-size:13px;color:#3a3a3a;text-align:right;">3.94</div>
<div style="left:1153px;top:603px;width:71px;height:20px;background:#eeeff1;border:1px solid #cfd5dc"></div>
<div class="t" style="right:232.5px;top:606.80px;font-size:13px;color:#3a3a3a;text-align:right;">384.98</div>
<div style="left:1228px;top:603px;width:71px;height:20px;background:#eeeff1;border:1px solid #cfd5dc"></div>
<div class="t" style="right:157.5px;top:606.80px;font-size:13px;color:#3a3a3a;text-align:right;">613.97</div>
<div style="left:1303px;top:603px;width:85px;height:20px;background:#fff;border:1px solid #cfd5dc"></div>
<svg style="position:absolute;left:1391px;top:604px;" width="16" height="17" viewBox="0 0 16 17"><path d="M1.2 2.4 H14.8 M6.1 2.4 A1.9 1.9 0 0 1 9.9 2.4" fill="none" stroke="#959da8" stroke-width="1.15"/><path d="M2.6 4.4 H13.4 A1.2 1.2 0 0 1 14.5 5.8 L12.6 14.2 A1.5 1.5 0 0 1 11.2 15.3 H4.8 A1.5 1.5 0 0 1 3.4 14.2 L1.5 5.8 A1.2 1.2 0 0 1 2.6 4.4 Z M6.5 7.2 V12.7 M9.5 7.2 V12.7" fill="none" stroke="#959da8" stroke-width="1.15"/></svg>
<svg style="position:absolute;left:22.5px;top:633.5px;" width="8" height="14" viewBox="0 0 8 14"><path d="M1 1 L6 6 L1 11 Z" fill="none" stroke="#999" stroke-width="1.1" stroke-linejoin="miter"/></svg>
<div style="left:41px;top:631px;width:49px;height:20px;background:#fff;border:1px solid #cfd5dc"></div>
<div class="t" style="left:44px;top:634.80px;font-size:13px;color:#3a3a3a;">30</div>
<div style="left:89px;top:631px;width:20px;height:20px;background:#eeeff1;border:1px solid #cfd5dc"></div>
<svg style="position:absolute;left:92px;top:634px;" width="14" height="14" viewBox="0 0 14 14"><circle cx="8.3" cy="5.7" r="3.3" fill="none" stroke="#8f97a3" stroke-width="1"/><path d="M6 8 L2.5 11.5" stroke="#8f97a3" stroke-width="1.1"/></svg>
<div style="left:137px;top:631px;width:49px;height:20px;background:#fff;border:1px solid #cfd5dc"></div>
<div class="t" style="left:140px;top:634.80px;font-size:13px;color:#3a3a3a;">10</div>
<div style="left:185px;top:631px;width:20px;height:20px;background:#eeeff1;border:1px solid #cfd5dc"></div>
<svg style="position:absolute;left:188px;top:634px;" width="14" height="14" viewBox="0 0 14 14"><path d="M1.9 1.9 L7 6.8 L2.1 11.8 M6.8 1.9 L12 6.8 L6.8 11.8" fill="none" stroke="#8f97a3" stroke-width="1.35"/></svg>
<svg style="position:absolute;left:223px;top:631px;overflow:visible" width="17" height="17" viewBox="0 0 17 17"><rect x="0" y="0" width="16" height="16" rx="1.5" fill="#9aa2ac"/><rect x="1" y="4" width="4" height="2" fill="#fff"/><rect x="1" y="7" width="4" height="2" fill="#fff"/><rect x="1" y="10" width="4" height="2" fill="#fff"/><rect x="1" y="13" width="4" height="2" fill="#fff"/><rect x="6" y="4" width="4" height="2" fill="#fff"/><rect x="6" y="7" width="4" height="2" fill="#fff"/><rect x="6" y="10" width="4" height="2" fill="#fff"/><rect x="6" y="13" width="4" height="2" fill="#fff"/><rect x="11" y="4" width="4" height="2" fill="#fff"/><rect x="11" y="7" width="4" height="2" fill="#fff"/><rect x="11" y="10" width="4" height="2" fill="#fff"/><rect x="11" y="13" width="4" height="2" fill="#fff"/><path d="M3.8 11.3 L8.1 14.6 L15.2 7.3" fill="none" stroke="#169316" stroke-width="3.6" stroke-linejoin="round" stroke-linecap="round"/><path d="M3.8 11.3 L8.1 14.6 L15.2 7.3" fill="none" stroke="#3cc23c" stroke-width="2" stroke-linejoin="round" stroke-linecap="round"/></svg>
<div style="left:254px;top:631px;width:256px;height:20px;background:#fff;border:1px solid #cfd5dc"></div>
<div class="t" style="left:257px;top:634.80px;font-size:13px;color:#3a3a3a;">Erect Workbench</div>
<div style="left:514px;top:631px;width:71px;height:20px;background:#fff;border:1px solid #cfd5dc"></div>
<div class="t" style="right:871.5px;top:634.80px;font-size:13px;color:#3a3a3a;text-align:right;">2.27</div>
<div style="left:589px;top:631px;width:56px;height:20px;background:#fff;border:1px solid #cfd5dc"></div>
<div class="t" style="left:592px;top:634.80px;font-size:13px;color:#3a3a3a;">H</div>
<div style="left:644px;top:631px;width:20px;height:20px;background:#eeeff1;border:1px solid #cfd5dc"></div>
<svg style="position:absolute;left:647px;top:634px;" width="14" height="14" viewBox="0 0 14 14"><circle cx="8.3" cy="5.7" r="3.3" fill="none" stroke="#8f97a3" stroke-width="1"/><path d="M6 8 L2.5 11.5" stroke="#8f97a3" stroke-width="1.1"/></svg>
<div style="left:667px;top:631px;width:71px;height:20px;background:#fff;border:1px solid #cfd5dc"></div>
<div class="t" style="right:718.5px;top:634.80px;font-size:13px;color:#3a3a3a;text-align:right;">1.00</div>
<div style="left:742px;top:631px;width:71px;height:20px;background:#fff;border:1px solid #cfd5dc"></div>
<div style="left:817px;top:631px;width:71px;height:20px;background:#fff;border:1px solid #cfd5dc"></div>
<div class="t" style="left:820px;top:634.80px;font-size:13px;color:#3a3a3a;">CR-02</div>
<div style="left:887px;top:631px;width:20px;height:20px;background:#eeeff1;border:1px solid #cfd5dc"></div>
<svg style="position:absolute;left:890px;top:634px;" width="14" height="14" viewBox="0 0 14 14"><circle cx="8.3" cy="5.7" r="3.3" fill="none" stroke="#8f97a3" stroke-width="1"/><path d="M6 8 L2.5 11.5" stroke="#8f97a3" stroke-width="1.1"/></svg>
<div style="left:911px;top:631px;width:70px;height:20px;background:#fff;border:1px solid #cfd5dc"></div>
<div class="t" style="left:914px;top:634.80px;font-size:13px;color:#3a3a3a;">CR</div>
<div style="left:980px;top:631px;width:20px;height:20px;background:#eeeff1;border:1px solid #cfd5dc"></div>
<svg style="position:absolute;left:983px;top:634px;" width="14" height="14" viewBox="0 0 14 14"><circle cx="8.3" cy="5.7" r="3.3" fill="none" stroke="#8f97a3" stroke-width="1"/><path d="M6 8 L2.5 11.5" stroke="#8f97a3" stroke-width="1.1"/></svg>
<div style="left:1003px;top:631px;width:71px;height:20px;background:#fff;border:1px solid #cfd5dc"></div>
<div class="t" style="right:382.5px;top:634.80px;font-size:13px;color:#3a3a3a;text-align:right;">1.00</div>
<div style="left:1078px;top:631px;width:71px;height:20px;background:#eeeff1;border:1px solid #cfd5dc"></div>
<div class="t" style="right:307.5px;top:634.80px;font-size:13px;color:#3a3a3a;text-align:right;">2.27</div>
<div style="left:1153px;top:631px;width:71px;height:20px;background:#eeeff1;border:1px solid #cfd5dc"></div>
<div class="t" style="right:232.5px;top:634.80px;font-size:13px;color:#3a3a3a;text-align:right;">201.05</div>
<div style="left:1228px;top:631px;width:71px;height:20px;background:#eeeff1;border:1px solid #cfd5dc"></div>
<div class="t" style="right:157.5px;top:634.80px;font-size:13px;color:#3a3a3a;text-align:right;">330.83</div>
<div style="left:1303px;top:631px;width:85px;height:20px;background:#fff;border:1px solid #cfd5dc"></div>
<svg style="position:absolute;left:1391px;top:632px;" width="16" height="17" viewBox="0 0 16 17"><path d="M1.2 2.4 H14.8 M6.1 2.4 A1.9 1.9 0 0 1 9.9 2.4" fill="none" stroke="#959da8" stroke-width="1.15"/><path d="M2.6 4.4 H13.4 A1.2 1.2 0 0 1 14.5 5.8 L12.6 14.2 A1.5 1.5 0 0 1 11.2 15.3 H4.8 A1.5 1.5 0 0 1 3.4 14.2 L1.5 5.8 A1.2 1.2 0 0 1 2.6 4.4 Z M6.5 7.2 V12.7 M9.5 7.2 V12.7" fill="none" stroke="#959da8" stroke-width="1.15"/></svg>
<svg style="position:absolute;left:22.5px;top:662.5px;" width="8" height="14" viewBox="0 0 8 14"><path d="M1 1 L6 6 L1 11 Z" fill="none" stroke="#999" stroke-width="1.1" stroke-linejoin="miter"/></svg>
<div style="left:41px;top:660px;width:49px;height:20px;background:#fff;border:1px solid #cfd5dc"></div>
<div class="t" style="left:44px;top:663.80px;font-size:13px;color:#3a3a3a;">40</div>
<div style="left:89px;top:660px;width:20px;height:20px;background:#eeeff1;border:1px solid #cfd5dc"></div>
<svg style="position:absolute;left:92px;top:663px;" width="14" height="14" viewBox="0 0 14 14"><circle cx="8.3" cy="5.7" r="3.3" fill="none" stroke="#8f97a3" stroke-width="1"/><path d="M6 8 L2.5 11.5" stroke="#8f97a3" stroke-width="1.1"/></svg>
<div style="left:137px;top:660px;width:49px;height:20px;background:#fff;border:1px solid #cfd5dc"></div>
<div class="t" style="left:140px;top:663.80px;font-size:13px;color:#3a3a3a;">10</div>
<div style="left:185px;top:660px;width:20px;height:20px;background:#eeeff1;border:1px solid #cfd5dc"></div>
<svg style="position:absolute;left:188px;top:663px;" width="14" height="14" viewBox="0 0 14 14"><path d="M1.9 1.9 L7 6.8 L2.1 11.8 M6.8 1.9 L12 6.8 L6.8 11.8" fill="none" stroke="#8f97a3" stroke-width="1.35"/></svg>
<svg style="position:absolute;left:223px;top:660px;overflow:visible" width="17" height="17" viewBox="0 0 17 17"><rect x="0" y="0" width="16" height="16" rx="1.5" fill="#9aa2ac"/><rect x="1" y="4" width="4" height="2" fill="#fff"/><rect x="1" y="7" width="4" height="2" fill="#fff"/><rect x="1" y="10" width="4" height="2" fill="#fff"/><rect x="1" y="13" width="4" height="2" fill="#fff"/><rect x="6" y="4" width="4" height="2" fill="#fff"/><rect x="6" y="7" width="4" height="2" fill="#fff"/><rect x="6" y="10" width="4" height="2" fill="#fff"/><rect x="6" y="13" width="4" height="2" fill="#fff"/><rect x="11" y="4" width="4" height="2" fill="#fff"/><rect x="11" y="7" width="4" height="2" fill="#fff"/><rect x="11" y="10" width="4" height="2" fill="#fff"/><rect x="11" y="13" width="4" height="2" fill="#fff"/></svg>
<div style="left:254px;top:660px;width:256px;height:20px;background:#fff;border:1px solid #cfd5dc"></div>
<div class="t" style="left:257px;top:663.80px;font-size:13px;color:#3a3a3a;">Perform External Shell HP Water Wash</div>
<div style="left:514px;top:660px;width:71px;height:20px;background:#fff;border:1px solid #cfd5dc"></div>
<div class="t" style="right:871.5px;top:663.80px;font-size:13px;color:#3a3a3a;text-align:right;">1.20</div>
<div style="left:589px;top:660px;width:56px;height:20px;background:#fff;border:1px solid #cfd5dc"></div>
<div class="t" style="left:592px;top:663.80px;font-size:13px;color:#3a3a3a;">H</div>
<div style="left:644px;top:660px;width:20px;height:20px;background:#eeeff1;border:1px solid #cfd5dc"></div>
<svg style="position:absolute;left:647px;top:663px;" width="14" height="14" viewBox="0 0 14 14"><circle cx="8.3" cy="5.7" r="3.3" fill="none" stroke="#8f97a3" stroke-width="1"/><path d="M6 8 L2.5 11.5" stroke="#8f97a3" stroke-width="1.1"/></svg>
<div style="left:667px;top:660px;width:71px;height:20px;background:#fff;border:1px solid #cfd5dc"></div>
<div class="t" style="right:718.5px;top:663.80px;font-size:13px;color:#3a3a3a;text-align:right;">1.00</div>
<div style="left:742px;top:660px;width:71px;height:20px;background:#fff;border:1px solid #cfd5dc"></div>
<div style="left:817px;top:660px;width:71px;height:20px;background:#fff;border:1px solid #cfd5dc"></div>
<div class="t" style="left:820px;top:663.80px;font-size:13px;color:#3a3a3a;">PR-01</div>
<div style="left:887px;top:660px;width:20px;height:20px;background:#eeeff1;border:1px solid #cfd5dc"></div>
<svg style="position:absolute;left:890px;top:663px;" width="14" height="14" viewBox="0 0 14 14"><circle cx="8.3" cy="5.7" r="3.3" fill="none" stroke="#8f97a3" stroke-width="1"/><path d="M6 8 L2.5 11.5" stroke="#8f97a3" stroke-width="1.1"/></svg>
<div style="left:911px;top:660px;width:70px;height:20px;background:#fff;border:1px solid #cfd5dc"></div>
<div class="t" style="left:914px;top:663.80px;font-size:13px;color:#3a3a3a;">PR</div>
<div style="left:980px;top:660px;width:20px;height:20px;background:#eeeff1;border:1px solid #cfd5dc"></div>
<svg style="position:absolute;left:983px;top:663px;" width="14" height="14" viewBox="0 0 14 14"><circle cx="8.3" cy="5.7" r="3.3" fill="none" stroke="#8f97a3" stroke-width="1"/><path d="M6 8 L2.5 11.5" stroke="#8f97a3" stroke-width="1.1"/></svg>
<div style="left:1003px;top:660px;width:71px;height:20px;background:#fff;border:1px solid #cfd5dc"></div>
<div class="t" style="right:382.5px;top:663.80px;font-size:13px;color:#3a3a3a;text-align:right;">1.00</div>
<div style="left:1078px;top:660px;width:71px;height:20px;background:#eeeff1;border:1px solid #cfd5dc"></div>
<div class="t" style="right:307.5px;top:663.80px;font-size:13px;color:#3a3a3a;text-align:right;">1.20</div>
<div style="left:1153px;top:660px;width:71px;height:20px;background:#eeeff1;border:1px solid #cfd5dc"></div>
<div class="t" style="right:232.5px;top:663.80px;font-size:13px;color:#3a3a3a;text-align:right;">151.78</div>
<div style="left:1228px;top:660px;width:71px;height:20px;background:#eeeff1;border:1px solid #cfd5dc"></div>
<div class="t" style="right:157.5px;top:663.80px;font-size:13px;color:#3a3a3a;text-align:right;">190.79</div>
<div style="left:1303px;top:660px;width:85px;height:20px;background:#fff;border:1px solid #cfd5dc"></div>
<svg style="position:absolute;left:1391px;top:661px;" width="16" height="17" viewBox="0 0 16 17"><path d="M1.2 2.4 H14.8 M6.1 2.4 A1.9 1.9 0 0 1 9.9 2.4" fill="none" stroke="#959da8" stroke-width="1.15"/><path d="M2.6 4.4 H13.4 A1.2 1.2 0 0 1 14.5 5.8 L12.6 14.2 A1.5 1.5 0 0 1 11.2 15.3 H4.8 A1.5 1.5 0 0 1 3.4 14.2 L1.5 5.8 A1.2 1.2 0 0 1 2.6 4.4 Z M6.5 7.2 V12.7 M9.5 7.2 V12.7" fill="none" stroke="#959da8" stroke-width="1.15"/></svg>
<div style="left:13px;top:684px;width:1396px;height:28px;background:#d7d4ef"></div>
<svg style="position:absolute;left:22.5px;top:690.5px;" width="8" height="14" viewBox="0 0 8 14"><path d="M1 1 L6 6 L1 11 Z" fill="none" stroke="#999" stroke-width="1.1" stroke-linejoin="miter"/></svg>
<div style="left:41px;top:688px;width:49px;height:20px;background:#fff;border:1px solid #cfd5dc"></div>
<div class="t" style="left:44px;top:691.80px;font-size:13px;color:#3a3a3a;">50</div>
<div style="left:89px;top:688px;width:20px;height:20px;background:#dcd9f0;border:1px solid #cfd5dc"></div>
<svg style="position:absolute;left:92px;top:691px;" width="14" height="14" viewBox="0 0 14 14"><circle cx="8.3" cy="5.7" r="3.3" fill="none" stroke="#8f97a3" stroke-width="1"/><path d="M6 8 L2.5 11.5" stroke="#8f97a3" stroke-width="1.1"/></svg>
<div style="left:137px;top:688px;width:49px;height:20px;background:#fff;border:1px solid #cfd5dc"></div>
<div class="t" style="left:140px;top:691.80px;font-size:13px;color:#3a3a3a;">10</div>
<div style="left:185px;top:688px;width:20px;height:20px;background:#dcd9f0;border:1px solid #cfd5dc"></div>
<svg style="position:absolute;left:188px;top:691px;" width="14" height="14" viewBox="0 0 14 14"><path d="M1.9 1.9 L7 6.8 L2.1 11.8 M6.8 1.9 L12 6.8 L6.8 11.8" fill="none" stroke="#8f97a3" stroke-width="1.35"/></svg>
<svg style="position:absolute;left:223px;top:688px;overflow:visible" width="17" height="17" viewBox="0 0 17 17"><rect x="0" y="0" width="16" height="16" rx="1.5" fill="#9aa2ac"/><rect x="1" y="4" width="4" height="2" fill="#fff"/><rect x="1" y="7" width="4" height="2" fill="#fff"/><rect x="1" y="10" width="4" height="2" fill="#fff"/><rect x="1" y="13" width="4" height="2" fill="#fff"/><rect x="6" y="4" width="4" height="2" fill="#fff"/><rect x="6" y="7" width="4" height="2" fill="#fff"/><rect x="6" y="10" width="4" height="2" fill="#fff"/><rect x="6" y="13" width="4" height="2" fill="#fff"/><rect x="11" y="4" width="4" height="2" fill="#fff"/><rect x="11" y="7" width="4" height="2" fill="#fff"/><rect x="11" y="10" width="4" height="2" fill="#fff"/><rect x="11" y="13" width="4" height="2" fill="#fff"/></svg>
<div style="left:254px;top:688px;width:256px;height:20px;background:#fff;border:1px solid #cfd5dc"></div>
<div class="t" style="left:257px;top:691.80px;font-size:13px;color:#3a3a3a;">Regulator Witness/Approval Required</div>
<div style="left:514px;top:688px;width:71px;height:20px;background:#fff;border:1px solid #cfd5dc"></div>
<div class="t" style="right:871.5px;top:691.80px;font-size:13px;color:#3a3a3a;text-align:right;">3.00</div>
<div style="left:589px;top:688px;width:56px;height:20px;background:#fff;border:1px solid #cfd5dc"></div>
<div class="t" style="left:592px;top:691.80px;font-size:13px;color:#3a3a3a;">H</div>
<div style="left:644px;top:688px;width:20px;height:20px;background:#dcd9f0;border:1px solid #cfd5dc"></div>
<svg style="position:absolute;left:647px;top:691px;" width="14" height="14" viewBox="0 0 14 14"><circle cx="8.3" cy="5.7" r="3.3" fill="none" stroke="#8f97a3" stroke-width="1"/><path d="M6 8 L2.5 11.5" stroke="#8f97a3" stroke-width="1.1"/></svg>
<div style="left:667px;top:688px;width:71px;height:20px;background:#fff;border:1px solid #cfd5dc"></div>
<div class="t" style="right:718.5px;top:691.80px;font-size:13px;color:#3a3a3a;text-align:right;">1.00</div>
<div style="left:742px;top:688px;width:71px;height:20px;background:#fff;border:1px solid #cfd5dc"></div>
<div style="left:817px;top:688px;width:71px;height:20px;background:#fff;border:1px solid #cfd5dc"></div>
<div class="t" style="left:820px;top:691.80px;font-size:13px;color:#3a3a3a;">PR-01</div>
<div style="left:887px;top:688px;width:20px;height:20px;background:#dcd9f0;border:1px solid #cfd5dc"></div>
<svg style="position:absolute;left:890px;top:691px;" width="14" height="14" viewBox="0 0 14 14"><circle cx="8.3" cy="5.7" r="3.3" fill="none" stroke="#8f97a3" stroke-width="1"/><path d="M6 8 L2.5 11.5" stroke="#8f97a3" stroke-width="1.1"/></svg>
<div style="left:911px;top:688px;width:70px;height:20px;background:#fff;border:1px solid #cfd5dc"></div>
<div class="t" style="left:914px;top:691.80px;font-size:13px;color:#3a3a3a;">PR</div>
<div style="left:980px;top:688px;width:20px;height:20px;background:#dcd9f0;border:1px solid #cfd5dc"></div>
<svg style="position:absolute;left:983px;top:691px;" width="14" height="14" viewBox="0 0 14 14"><circle cx="8.3" cy="5.7" r="3.3" fill="none" stroke="#8f97a3" stroke-width="1"/><path d="M6 8 L2.5 11.5" stroke="#8f97a3" stroke-width="1.1"/></svg>
<div style="left:1003px;top:688px;width:71px;height:20px;background:#fff;border:1px solid #cfd5dc"></div>
<div class="t" style="right:382.5px;top:691.80px;font-size:13px;color:#3a3a3a;text-align:right;">1.00</div>
<div style="left:1078px;top:688px;width:71px;height:20px;background:#eeeff1;border:1px solid #cfd5dc"></div>
<div class="t" style="right:307.5px;top:691.80px;font-size:13px;color:#3a3a3a;text-align:right;">3.00</div>
<div style="left:1153px;top:688px;width:71px;height:20px;background:#eeeff1;border:1px solid #cfd5dc"></div>
<div class="t" style="right:232.5px;top:691.80px;font-size:13px;color:#3a3a3a;text-align:right;">379.44</div>
<div style="left:1228px;top:688px;width:71px;height:20px;background:#eeeff1;border:1px solid #cfd5dc"></div>
<div class="t" style="right:157.5px;top:691.80px;font-size:13px;color:#3a3a3a;text-align:right;">476.97</div>
<div style="left:1303px;top:688px;width:85px;height:20px;background:#fff;border:1px solid #cfd5dc"></div>
<svg style="position:absolute;left:1391px;top:689px;" width="16" height="17" viewBox="0 0 16 17"><path d="M1.2 2.4 H14.8 M6.1 2.4 A1.9 1.9 0 0 1 9.9 2.4" fill="none" stroke="#959da8" stroke-width="1.15"/><path d="M2.6 4.4 H13.4 A1.2 1.2 0 0 1 14.5 5.8 L12.6 14.2 A1.5 1.5 0 0 1 11.2 15.3 H4.8 A1.5 1.5 0 0 1 3.4 14.2 L1.5 5.8 A1.2 1.2 0 0 1 2.6 4.4 Z M6.5 7.2 V12.7 M9.5 7.2 V12.7" fill="none" stroke="#959da8" stroke-width="1.15"/></svg>
<svg style="position:absolute;left:22.5px;top:718.5px;" width="8" height="14" viewBox="0 0 8 14"><path d="M1 1 L6 6 L1 11 Z" fill="none" stroke="#999" stroke-width="1.1" stroke-linejoin="miter"/></svg>
<div style="left:41px;top:716px;width:49px;height:20px;background:#fff;border:1px solid #cfd5dc"></div>
<div class="t" style="left:44px;top:719.80px;font-size:13px;color:#3a3a3a;">60</div>
<div style="left:89px;top:716px;width:20px;height:20px;background:#eeeff1;border:1px solid #cfd5dc"></div>
<svg style="position:absolute;left:92px;top:719px;" width="14" height="14" viewBox="0 0 14 14"><circle cx="8.3" cy="5.7" r="3.3" fill="none" stroke="#8f97a3" stroke-width="1"/><path d="M6 8 L2.5 11.5" stroke="#8f97a3" stroke-width="1.1"/></svg>
<div style="left:137px;top:716px;width:49px;height:20px;background:#fff;border:1px solid #cfd5dc"></div>
<div class="t" style="left:140px;top:719.80px;font-size:13px;color:#3a3a3a;">10</div>
<div style="left:185px;top:716px;width:20px;height:20px;background:#eeeff1;border:1px solid #cfd5dc"></div>
<svg style="position:absolute;left:188px;top:719px;" width="14" height="14" viewBox="0 0 14 14"><path d="M1.9 1.9 L7 6.8 L2.1 11.8 M6.8 1.9 L12 6.8 L6.8 11.8" fill="none" stroke="#8f97a3" stroke-width="1.35"/></svg>
<svg style="position:absolute;left:223px;top:716px;overflow:visible" width="17" height="17" viewBox="0 0 17 17"><rect x="0" y="0" width="16" height="16" rx="1.5" fill="#9aa2ac"/><rect x="1" y="4" width="4" height="2" fill="#fff"/><rect x="1" y="7" width="4" height="2" fill="#fff"/><rect x="1" y="10" width="4" height="2" fill="#fff"/><rect x="1" y="13" width="4" height="2" fill="#fff"/><rect x="6" y="4" width="4" height="2" fill="#fff"/><rect x="6" y="7" width="4" height="2" fill="#fff"/><rect x="6" y="10" width="4" height="2" fill="#fff"/><rect x="6" y="13" width="4" height="2" fill="#fff"/><rect x="11" y="4" width="4" height="2" fill="#fff"/><rect x="11" y="7" width="4" height="2" fill="#fff"/><rect x="11" y="10" width="4" height="2" fill="#fff"/><rect x="11" y="13" width="4" height="2" fill="#fff"/><path d="M3.8 11.3 L8.1 14.6 L15.2 7.3" fill="none" stroke="#169316" stroke-width="3.6" stroke-linejoin="round" stroke-linecap="round"/><path d="M3.8 11.3 L8.1 14.6 L15.2 7.3" fill="none" stroke="#3cc23c" stroke-width="2" stroke-linejoin="round" stroke-linecap="round"/></svg>
<div style="left:254px;top:716px;width:256px;height:20px;background:#fff;border:1px solid #cfd5dc"></div>
<div class="t" style="left:257px;top:719.80px;font-size:13px;color:#3a3a3a;">Perform Elec Reconnects &amp; De-Isolate</div>
<div style="left:514px;top:716px;width:71px;height:20px;background:#fff;border:1px solid #cfd5dc"></div>
<div class="t" style="right:871.5px;top:719.80px;font-size:13px;color:#3a3a3a;text-align:right;">3.45</div>
<div style="left:589px;top:716px;width:56px;height:20px;background:#fff;border:1px solid #cfd5dc"></div>
<div class="t" style="left:592px;top:719.80px;font-size:13px;color:#3a3a3a;">H</div>
<div style="left:644px;top:716px;width:20px;height:20px;background:#eeeff1;border:1px solid #cfd5dc"></div>
<svg style="position:absolute;left:647px;top:719px;" width="14" height="14" viewBox="0 0 14 14"><circle cx="8.3" cy="5.7" r="3.3" fill="none" stroke="#8f97a3" stroke-width="1"/><path d="M6 8 L2.5 11.5" stroke="#8f97a3" stroke-width="1.1"/></svg>
<div style="left:667px;top:716px;width:71px;height:20px;background:#fff;border:1px solid #cfd5dc"></div>
<div class="t" style="right:718.5px;top:719.80px;font-size:13px;color:#3a3a3a;text-align:right;">1.00</div>
<div style="left:742px;top:716px;width:71px;height:20px;background:#fff;border:1px solid #cfd5dc"></div>
<div style="left:817px;top:716px;width:71px;height:20px;background:#fff;border:1px solid #cfd5dc"></div>
<div class="t" style="left:820px;top:719.80px;font-size:13px;color:#3a3a3a;">EL-05</div>
<div style="left:887px;top:716px;width:20px;height:20px;background:#eeeff1;border:1px solid #cfd5dc"></div>
<svg style="position:absolute;left:890px;top:719px;" width="14" height="14" viewBox="0 0 14 14"><circle cx="8.3" cy="5.7" r="3.3" fill="none" stroke="#8f97a3" stroke-width="1"/><path d="M6 8 L2.5 11.5" stroke="#8f97a3" stroke-width="1.1"/></svg>
<div style="left:911px;top:716px;width:70px;height:20px;background:#fff;border:1px solid #cfd5dc"></div>
<div class="t" style="left:914px;top:719.80px;font-size:13px;color:#3a3a3a;">EL</div>
<div style="left:980px;top:716px;width:20px;height:20px;background:#eeeff1;border:1px solid #cfd5dc"></div>
<svg style="position:absolute;left:983px;top:719px;" width="14" height="14" viewBox="0 0 14 14"><circle cx="8.3" cy="5.7" r="3.3" fill="none" stroke="#8f97a3" stroke-width="1"/><path d="M6 8 L2.5 11.5" stroke="#8f97a3" stroke-width="1.1"/></svg>
<div style="left:1003px;top:716px;width:71px;height:20px;background:#fff;border:1px solid #cfd5dc"></div>
<div class="t" style="right:382.5px;top:719.80px;font-size:13px;color:#3a3a3a;text-align:right;">1.00</div>
<div style="left:1078px;top:716px;width:71px;height:20px;background:#eeeff1;border:1px solid #cfd5dc"></div>
<div class="t" style="right:307.5px;top:719.80px;font-size:13px;color:#3a3a3a;text-align:right;">3.45</div>
<div style="left:1153px;top:716px;width:71px;height:20px;background:#eeeff1;border:1px solid #cfd5dc"></div>
<div class="t" style="right:232.5px;top:719.80px;font-size:13px;color:#3a3a3a;text-align:right;">337.10</div>
<div style="left:1228px;top:716px;width:71px;height:20px;background:#eeeff1;border:1px solid #cfd5dc"></div>
<div class="t" style="right:157.5px;top:719.80px;font-size:13px;color:#3a3a3a;text-align:right;">537.61</div>
<div style="left:1303px;top:716px;width:85px;height:20px;background:#fff;border:1px solid #cfd5dc"></div>
<svg style="position:absolute;left:1391px;top:717px;" width="16" height="17" viewBox="0 0 16 17"><path d="M1.2 2.4 H14.8 M6.1 2.4 A1.9 1.9 0 0 1 9.9 2.4" fill="none" stroke="#959da8" stroke-width="1.15"/><path d="M2.6 4.4 H13.4 A1.2 1.2 0 0 1 14.5 5.8 L12.6 14.2 A1.5 1.5 0 0 1 11.2 15.3 H4.8 A1.5 1.5 0 0 1 3.4 14.2 L1.5 5.8 A1.2 1.2 0 0 1 2.6 4.4 Z M6.5 7.2 V12.7 M9.5 7.2 V12.7" fill="none" stroke="#959da8" stroke-width="1.15"/></svg>
<svg style="position:absolute;left:22.5px;top:747.5px;" width="8" height="14" viewBox="0 0 8 14"><path d="M1 1 L6 6 L1 11 Z" fill="none" stroke="#999" stroke-width="1.1" stroke-linejoin="miter"/></svg>
<div style="left:41px;top:745px;width:49px;height:20px;background:#fff;border:1px solid #cfd5dc"></div>
<div class="t" style="left:44px;top:748.80px;font-size:13px;color:#3a3a3a;">70</div>
<div style="left:89px;top:745px;width:20px;height:20px;background:#eeeff1;border:1px solid #cfd5dc"></div>
<svg style="position:absolute;left:92px;top:748px;" width="14" height="14" viewBox="0 0 14 14"><circle cx="8.3" cy="5.7" r="3.3" fill="none" stroke="#8f97a3" stroke-width="1"/><path d="M6 8 L2.5 11.5" stroke="#8f97a3" stroke-width="1.1"/></svg>
<div style="left:137px;top:745px;width:49px;height:20px;background:#fff;border:1px solid #cfd5dc"></div>
<div class="t" style="left:140px;top:748.80px;font-size:13px;color:#3a3a3a;">10</div>
<div style="left:185px;top:745px;width:20px;height:20px;background:#eeeff1;border:1px solid #cfd5dc"></div>
<svg style="position:absolute;left:188px;top:748px;" width="14" height="14" viewBox="0 0 14 14"><path d="M1.9 1.9 L7 6.8 L2.1 11.8 M6.8 1.9 L12 6.8 L6.8 11.8" fill="none" stroke="#8f97a3" stroke-width="1.35"/></svg>
<svg style="position:absolute;left:223px;top:745px;overflow:visible" width="17" height="17" viewBox="0 0 17 17"><rect x="0" y="0" width="16" height="16" rx="1.5" fill="#9aa2ac"/><rect x="1" y="4" width="4" height="2" fill="#fff"/><rect x="1" y="7" width="4" height="2" fill="#fff"/><rect x="1" y="10" width="4" height="2" fill="#fff"/><rect x="1" y="13" width="4" height="2" fill="#fff"/><rect x="6" y="4" width="4" height="2" fill="#fff"/><rect x="6" y="7" width="4" height="2" fill="#fff"/><rect x="6" y="10" width="4" height="2" fill="#fff"/><rect x="6" y="13" width="4" height="2" fill="#fff"/><rect x="11" y="4" width="4" height="2" fill="#fff"/><rect x="11" y="7" width="4" height="2" fill="#fff"/><rect x="11" y="10" width="4" height="2" fill="#fff"/><rect x="11" y="13" width="4" height="2" fill="#fff"/></svg>
<div style="left:254px;top:745px;width:256px;height:20px;background:#fff;border:1px solid #cfd5dc"></div>
<div class="t" style="left:257px;top:748.80px;font-size:13px;color:#3a3a3a;">Perform Process Mechanical Deisolations</div>
<div style="left:514px;top:745px;width:71px;height:20px;background:#fff;border:1px solid #cfd5dc"></div>
<div class="t" style="right:871.5px;top:748.80px;font-size:13px;color:#3a3a3a;text-align:right;">3.10</div>
<div style="left:589px;top:745px;width:56px;height:20px;background:#fff;border:1px solid #cfd5dc"></div>
<div class="t" style="left:592px;top:748.80px;font-size:13px;color:#3a3a3a;">H</div>
<div style="left:644px;top:745px;width:20px;height:20px;background:#eeeff1;border:1px solid #cfd5dc"></div>
<svg style="position:absolute;left:647px;top:748px;" width="14" height="14" viewBox="0 0 14 14"><circle cx="8.3" cy="5.7" r="3.3" fill="none" stroke="#8f97a3" stroke-width="1"/><path d="M6 8 L2.5 11.5" stroke="#8f97a3" stroke-width="1.1"/></svg>
<div style="left:667px;top:745px;width:71px;height:20px;background:#fff;border:1px solid #cfd5dc"></div>
<div class="t" style="right:718.5px;top:748.80px;font-size:13px;color:#3a3a3a;text-align:right;">1.00</div>
<div style="left:742px;top:745px;width:71px;height:20px;background:#fff;border:1px solid #cfd5dc"></div>
<div style="left:817px;top:745px;width:71px;height:20px;background:#fff;border:1px solid #cfd5dc"></div>
<div class="t" style="left:820px;top:748.80px;font-size:13px;color:#3a3a3a;">EX-09</div>
<div style="left:887px;top:745px;width:20px;height:20px;background:#eeeff1;border:1px solid #cfd5dc"></div>
<svg style="position:absolute;left:890px;top:748px;" width="14" height="14" viewBox="0 0 14 14"><circle cx="8.3" cy="5.7" r="3.3" fill="none" stroke="#8f97a3" stroke-width="1"/><path d="M6 8 L2.5 11.5" stroke="#8f97a3" stroke-width="1.1"/></svg>
<div style="left:911px;top:745px;width:70px;height:20px;background:#fff;border:1px solid #cfd5dc"></div>
<div class="t" style="left:914px;top:748.80px;font-size:13px;color:#3a3a3a;">EX</div>
<div style="left:980px;top:745px;width:20px;height:20px;background:#eeeff1;border:1px solid #cfd5dc"></div>
<svg style="position:absolute;left:983px;top:748px;" width="14" height="14" viewBox="0 0 14 14"><circle cx="8.3" cy="5.7" r="3.3" fill="none" stroke="#8f97a3" stroke-width="1"/><path d="M6 8 L2.5 11.5" stroke="#8f97a3" stroke-width="1.1"/></svg>
<div style="left:1003px;top:745px;width:71px;height:20px;background:#fff;border:1px solid #cfd5dc"></div>
<div class="t" style="right:382.5px;top:748.80px;font-size:13px;color:#3a3a3a;text-align:right;">1.00</div>
<div style="left:1078px;top:745px;width:71px;height:20px;background:#eeeff1;border:1px solid #cfd5dc"></div>
<div class="t" style="right:307.5px;top:748.80px;font-size:13px;color:#3a3a3a;text-align:right;">3.10</div>
<div style="left:1153px;top:745px;width:71px;height:20px;background:#eeeff1;border:1px solid #cfd5dc"></div>
<div class="t" style="right:232.5px;top:748.80px;font-size:13px;color:#3a3a3a;text-align:right;">399.90</div>
<div style="left:1228px;top:745px;width:71px;height:20px;background:#eeeff1;border:1px solid #cfd5dc"></div>
<div class="t" style="right:157.5px;top:748.80px;font-size:13px;color:#3a3a3a;text-align:right;">511.31</div>
<div style="left:1303px;top:745px;width:85px;height:20px;background:#fff;border:1px solid #cfd5dc"></div>
<svg style="position:absolute;left:1391px;top:746px;" width="16" height="17" viewBox="0 0 16 17"><path d="M1.2 2.4 H14.8 M6.1 2.4 A1.9 1.9 0 0 1 9.9 2.4" fill="none" stroke="#959da8" stroke-width="1.15"/><path d="M2.6 4.4 H13.4 A1.2 1.2 0 0 1 14.5 5.8 L12.6 14.2 A1.5 1.5 0 0 1 11.2 15.3 H4.8 A1.5 1.5 0 0 1 3.4 14.2 L1.5 5.8 A1.2 1.2 0 0 1 2.6 4.4 Z M6.5 7.2 V12.7 M9.5 7.2 V12.7" fill="none" stroke="#959da8" stroke-width="1.15"/></svg>
<svg style="position:absolute;left:22.5px;top:775.5px;" width="8" height="14" viewBox="0 0 8 14"><path d="M1 1 L6 6 L1 11 Z" fill="none" stroke="#999" stroke-width="1.1" stroke-linejoin="miter"/></svg>
<div style="left:41px;top:773px;width:49px;height:20px;background:#fff;border:1px solid #cfd5dc"></div>
<div class="t" style="left:44px;top:776.80px;font-size:13px;color:#3a3a3a;">80</div>
<div style="left:89px;top:773px;width:20px;height:20px;background:#eeeff1;border:1px solid #cfd5dc"></div>
<svg style="position:absolute;left:92px;top:776px;" width="14" height="14" viewBox="0 0 14 14"><circle cx="8.3" cy="5.7" r="3.3" fill="none" stroke="#8f97a3" stroke-width="1"/><path d="M6 8 L2.5 11.5" stroke="#8f97a3" stroke-width="1.1"/></svg>
<div style="left:137px;top:773px;width:49px;height:20px;background:#fff;border:1px solid #cfd5dc"></div>
<div class="t" style="left:140px;top:776.80px;font-size:13px;color:#3a3a3a;">10</div>
<div style="left:185px;top:773px;width:20px;height:20px;background:#eeeff1;border:1px solid #cfd5dc"></div>
<svg style="position:absolute;left:188px;top:776px;" width="14" height="14" viewBox="0 0 14 14"><path d="M1.9 1.9 L7 6.8 L2.1 11.8 M6.8 1.9 L12 6.8 L6.8 11.8" fill="none" stroke="#8f97a3" stroke-width="1.35"/></svg>
<svg style="position:absolute;left:223px;top:773px;overflow:visible" width="17" height="17" viewBox="0 0 17 17"><rect x="0" y="0" width="16" height="16" rx="1.5" fill="#9aa2ac"/><rect x="1" y="4" width="4" height="2" fill="#fff"/><rect x="1" y="7" width="4" height="2" fill="#fff"/><rect x="1" y="10" width="4" height="2" fill="#fff"/><rect x="1" y="13" width="4" height="2" fill="#fff"/><rect x="6" y="4" width="4" height="2" fill="#fff"/><rect x="6" y="7" width="4" height="2" fill="#fff"/><rect x="6" y="10" width="4" height="2" fill="#fff"/><rect x="6" y="13" width="4" height="2" fill="#fff"/><rect x="11" y="4" width="4" height="2" fill="#fff"/><rect x="11" y="7" width="4" height="2" fill="#fff"/><rect x="11" y="10" width="4" height="2" fill="#fff"/><rect x="11" y="13" width="4" height="2" fill="#fff"/><path d="M3.8 11.3 L8.1 14.6 L15.2 7.3" fill="none" stroke="#169316" stroke-width="3.6" stroke-linejoin="round" stroke-linecap="round"/><path d="M3.8 11.3 L8.1 14.6 L15.2 7.3" fill="none" stroke="#3cc23c" stroke-width="2" stroke-linejoin="round" stroke-linecap="round"/></svg>
<div style="left:254px;top:773px;width:256px;height:20px;background:#fff;border:1px solid #cfd5dc"></div>
<div class="t" style="left:257px;top:776.80px;font-size:13px;color:#3a3a3a;">Dismantle Workbench</div>
<div style="left:514px;top:773px;width:71px;height:20px;background:#fff;border:1px solid #cfd5dc"></div>
<div class="t" style="right:871.5px;top:776.80px;font-size:13px;color:#3a3a3a;text-align:right;">0.95</div>
<div style="left:589px;top:773px;width:56px;height:20px;background:#fff;border:1px solid #cfd5dc"></div>
<div class="t" style="left:592px;top:776.80px;font-size:13px;color:#3a3a3a;">H</div>
<div style="left:644px;top:773px;width:20px;height:20px;background:#eeeff1;border:1px solid #cfd5dc"></div>
<svg style="position:absolute;left:647px;top:776px;" width="14" height="14" viewBox="0 0 14 14"><circle cx="8.3" cy="5.7" r="3.3" fill="none" stroke="#8f97a3" stroke-width="1"/><path d="M6 8 L2.5 11.5" stroke="#8f97a3" stroke-width="1.1"/></svg>
<div style="left:667px;top:773px;width:71px;height:20px;background:#fff;border:1px solid #cfd5dc"></div>
<div class="t" style="right:718.5px;top:776.80px;font-size:13px;color:#3a3a3a;text-align:right;">1.00</div>
<div style="left:742px;top:773px;width:71px;height:20px;background:#fff;border:1px solid #cfd5dc"></div>
<div style="left:817px;top:773px;width:71px;height:20px;background:#fff;border:1px solid #cfd5dc"></div>
<div class="t" style="left:820px;top:776.80px;font-size:13px;color:#3a3a3a;">CR-02</div>
<div style="left:887px;top:773px;width:20px;height:20px;background:#eeeff1;border:1px solid #cfd5dc"></div>
<svg style="position:absolute;left:890px;top:776px;" width="14" height="14" viewBox="0 0 14 14"><circle cx="8.3" cy="5.7" r="3.3" fill="none" stroke="#8f97a3" stroke-width="1"/><path d="M6 8 L2.5 11.5" stroke="#8f97a3" stroke-width="1.1"/></svg>
<div style="left:911px;top:773px;width:70px;height:20px;background:#fff;border:1px solid #cfd5dc"></div>
<div class="t" style="left:914px;top:776.80px;font-size:13px;color:#3a3a3a;">CR</div>
<div style="left:980px;top:773px;width:20px;height:20px;background:#eeeff1;border:1px solid #cfd5dc"></div>
<svg style="position:absolute;left:983px;top:776px;" width="14" height="14" viewBox="0 0 14 14"><circle cx="8.3" cy="5.7" r="3.3" fill="none" stroke="#8f97a3" stroke-width="1"/><path d="M6 8 L2.5 11.5" stroke="#8f97a3" stroke-width="1.1"/></svg>
<div style="left:1003px;top:773px;width:71px;height:20px;background:#fff;border:1px solid #cfd5dc"></div>
<div class="t" style="right:382.5px;top:776.80px;font-size:13px;color:#3a3a3a;text-align:right;">1.00</div>
<div style="left:1078px;top:773px;width:71px;height:20px;background:#eeeff1;border:1px solid #cfd5dc"></div>
<div class="t" style="right:307.5px;top:776.80px;font-size:13px;color:#3a3a3a;text-align:right;">0.95</div>
<div style="left:1153px;top:773px;width:71px;height:20px;background:#eeeff1;border:1px solid #cfd5dc"></div>
<div class="t" style="right:232.5px;top:776.80px;font-size:13px;color:#3a3a3a;text-align:right;">84.14</div>
<div style="left:1228px;top:773px;width:71px;height:20px;background:#eeeff1;border:1px solid #cfd5dc"></div>
<div class="t" style="right:157.5px;top:776.80px;font-size:13px;color:#3a3a3a;text-align:right;">138.45</div>
<div style="left:1303px;top:773px;width:85px;height:20px;background:#fff;border:1px solid #cfd5dc"></div>
<svg style="position:absolute;left:1391px;top:774px;" width="16" height="17" viewBox="0 0 16 17"><path d="M1.2 2.4 H14.8 M6.1 2.4 A1.9 1.9 0 0 1 9.9 2.4" fill="none" stroke="#959da8" stroke-width="1.15"/><path d="M2.6 4.4 H13.4 A1.2 1.2 0 0 1 14.5 5.8 L12.6 14.2 A1.5 1.5 0 0 1 11.2 15.3 H4.8 A1.5 1.5 0 0 1 3.4 14.2 L1.5 5.8 A1.2 1.2 0 0 1 2.6 4.4 Z M6.5 7.2 V12.7 M9.5 7.2 V12.7" fill="none" stroke="#959da8" stroke-width="1.15"/></svg>
<div class="t" style="right:378.5px;top:803.00px;font-size:13px;color:#4a5063;text-align:right;">Sub Total :</div>
<div class="t" style="right:378.5px;top:827.00px;font-size:13px;color:#4a5063;text-align:right;">Total :</div>
<div style="left:1078px;top:800px;width:71px;height:19px;background:#eeeff1;border:1px solid #cfd5dc"></div>
<div class="t" style="right:307.5px;top:803.00px;font-size:13px;color:#3a3a3a;text-align:right;">20.31</div>
<div style="left:1153px;top:800px;width:71px;height:19px;background:#eeeff1;border:1px solid #cfd5dc"></div>
<div class="t" style="right:232.5px;top:803.00px;font-size:13px;color:#3a3a3a;text-align:right;">2,247.99</div>
<div style="left:1228px;top:800px;width:71px;height:19px;background:#eeeff1;border:1px solid #cfd5dc"></div>
<div class="t" style="right:157.5px;top:803.00px;font-size:13px;color:#3a3a3a;text-align:right;">3,195.79</div>
<div style="left:1078px;top:824px;width:71px;height:19px;background:#eeeff1;border:1px solid #cfd5dc"></div>
<div class="t" style="right:307.5px;top:827.00px;font-size:13px;color:#3a3a3a;text-align:right;">20.31</div>
<div style="left:1153px;top:824px;width:71px;height:19px;background:#eeeff1;border:1px solid #cfd5dc"></div>
<div class="t" style="right:232.5px;top:827.00px;font-size:13px;color:#3a3a3a;text-align:right;">2,247.99</div>
<div style="left:1228px;top:824px;width:71px;height:19px;background:#eeeff1;border:1px solid #cfd5dc"></div>
<div class="t" style="right:157.5px;top:827.00px;font-size:13px;color:#3a3a3a;text-align:right;">3,195.79</div>
<div style="left:15px;top:850px;width:1392px;height:36px;background:#d0d6de"></div>
<div style="left:28px;top:856px;width:89px;height:25px;background:#7a6dd6;color:#fff;font-size:11px;font-weight:bold;letter-spacing:-0.75px;text-align:center;line-height:26px;white-space:pre">NEW ROW</div>
<div style="left:129px;top:856px;width:89px;height:25px;background:#7a6dd6;color:#fff;font-size:11px;font-weight:bold;letter-spacing:-0.75px;text-align:center;line-height:26px;white-space:pre">COPY ROW</div>
<div style="left:1204px;top:856px;width:89px;height:25px;background:#7a6dd6;color:#fff;font-size:11px;font-weight:bold;letter-spacing:-0.75px;text-align:center;line-height:26px;white-space:pre">NEW ROW</div>
<div style="left:1305px;top:856px;width:89px;height:25px;background:#7a6dd6;color:#fff;font-size:11px;font-weight:bold;letter-spacing:-0.75px;text-align:center;line-height:26px;white-space:pre">COPY ROW</div>
</body></html>
